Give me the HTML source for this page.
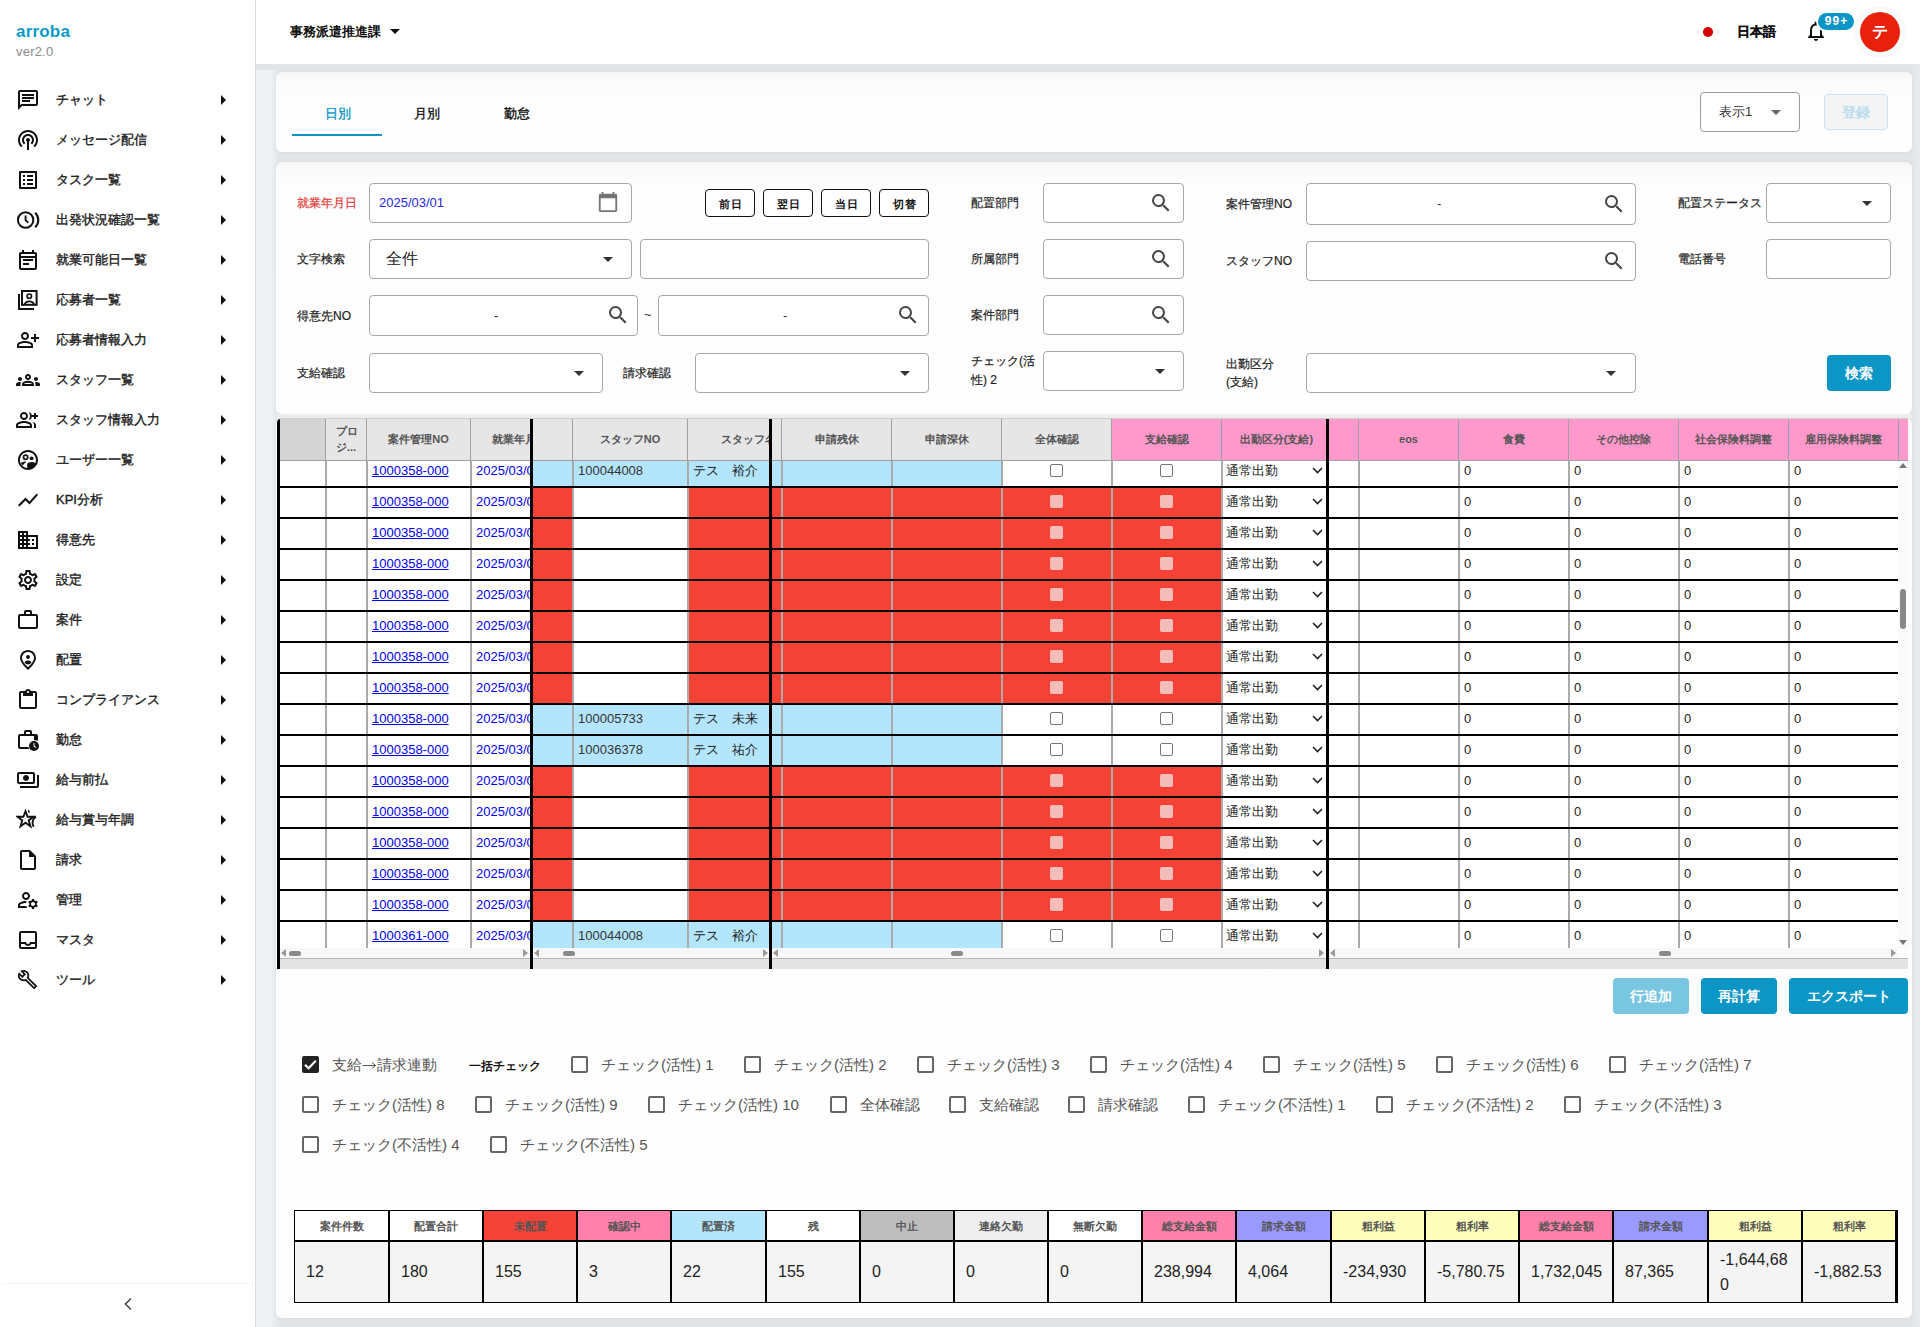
<!DOCTYPE html><html><head><meta charset="utf-8"><style>
*{box-sizing:border-box;margin:0;padding:0}
html,body{width:1920px;height:1327px;overflow:hidden}
body{position:relative;background:#e2e5e8;font-family:"Liberation Sans",sans-serif;color:#222}
.ab{position:absolute}
.t{position:absolute;white-space:nowrap;line-height:1}
.m{-webkit-text-stroke:0.35px currentColor}
.card{position:absolute;background:linear-gradient(#f6f6f6,#fafafa 8px,#fcfcfc 16px,#fdfdfd 24px,#fefefe);border-radius:6px;box-shadow:0 0 4px rgba(120,130,140,.12)}
.ic{position:absolute}
.tri-r{position:absolute;width:0;height:0;border-top:5px solid transparent;border-bottom:5px solid transparent;border-left:5px solid #111}
.tri-d{position:absolute;width:0;height:0;border-left:5px solid transparent;border-right:5px solid transparent;border-top:5px solid #222}
.box{position:absolute;border:1px solid #a8a8a8;border-radius:4px;background:#fff}
.lbl{position:absolute;white-space:nowrap;line-height:1;font-size:12px;color:#222;-webkit-text-stroke:0.2px currentColor}
.btn{position:absolute;border-radius:4px;color:#fff;font-weight:bold;font-size:14px;display:flex;align-items:center;justify-content:center;line-height:1}
.sbtn{position:absolute;border:1.5px solid #111;border-radius:4px;background:#fff;font-size:12px;font-weight:bold;display:flex;align-items:center;justify-content:center;line-height:1;color:#111}
</style></head><body>
<div class="ab" style="left:256px;top:70px;width:22px;height:1257px;background:linear-gradient(to right,#f0f3f6,#ecf0f3 70%,#e5e8eb)"></div>
<div class="ab" style="left:0;top:0;width:256px;height:1327px;background:#fff;border-right:1px solid #dcdcdc"></div>
<div class="t" style="left:16px;top:23px;font-size:17px;font-weight:bold;color:#0b9ac8;letter-spacing:0.2px">arroba</div>
<div class="t" style="left:16px;top:44.5px;font-size:13px;color:#8a8a8a;letter-spacing:0.2px">ver2.0</div>
<svg class="ic" style="left:16px;top:88px" width="24" height="24" viewBox="0 0 24 24" fill="#111"><path d="M4 4h16v12H5.17L4 17.17V4m0-2c-1.1 0-1.99.9-1.99 2L2 22l4-4h14c1.1 0 2-.9 2-2V4c0-1.1-.9-2-2-2H4zm2 10h8v2H6v-2zm0-3h12v2H6V9zm0-3h12v2H6V6z"/></svg>
<div class="t m" style="left:56px;top:93px;font-size:13px;color:#1a1a1a">チャット</div>
<div class="tri-r" style="left:221px;top:95px"></div>
<svg class="ic" style="left:16px;top:128px" width="24" height="24" viewBox="0 0 24 24" fill="#111"><path d="M14 12c0 .74-.4 1.38-1 1.72V22h-2v-8.28c-.6-.35-1-.98-1-1.72 0-1.1.9-2 2-2s2 .9 2 2zm-2-6c-3.31 0-6 2.69-6 6 0 1.74.75 3.31 1.94 4.4l1.42-1.42C8.53 14.25 8 13.19 8 12c0-2.21 1.79-4 4-4s4 1.79 4 4c0 1.19-.53 2.25-1.36 2.98l1.42 1.42C17.25 15.31 18 13.74 18 12c0-3.31-2.69-6-6-6zm0-4C6.48 2 2 6.48 2 12c0 2.85 1.2 5.41 3.11 7.24l1.42-1.42C4.98 16.36 4 14.29 4 12c0-4.41 3.59-8 8-8s8 3.59 8 8c0 2.29-.98 4.36-2.53 5.82l1.42 1.42C20.8 17.41 22 14.85 22 12c0-5.52-4.48-10-10-10z"/></svg>
<div class="t m" style="left:56px;top:133px;font-size:13px;color:#1a1a1a">メッセージ配信</div>
<div class="tri-r" style="left:221px;top:135px"></div>
<svg class="ic" style="left:16px;top:168px" width="24" height="24" viewBox="0 0 24 24" fill="#111"><path d="M19 5v14H5V5h14m1.1-2H3.9c-.5 0-.9.4-.9.9v16.2c0 .4.4.9.9.9h16.2c.4 0 .9-.5.9-.9V3.9c0-.5-.5-.9-.9-.9zM11 7h6v2h-6V7zm0 4h6v2h-6v-2zm0 4h6v2h-6zM7 7h2v2H7zm0 4h2v2H7zm0 4h2v2H7z"/></svg>
<div class="t m" style="left:56px;top:173px;font-size:13px;color:#1a1a1a">タスク一覧</div>
<div class="tri-r" style="left:221px;top:175px"></div>
<svg class="ic" style="left:16px;top:208px" width="24" height="24" viewBox="0 0 24 24" fill="#111"><circle cx="9.6" cy="12" r="7.7" fill="none" stroke="#111" stroke-width="2"/><path d="M9.6 7.6v4.6l2.8 2.4" fill="none" stroke="#111" stroke-width="1.9"/><path d="M19.2 4.8a10 10 0 0 1 0 14.4" fill="none" stroke="#111" stroke-width="2.1"/></svg>
<div class="t m" style="left:56px;top:213px;font-size:13px;color:#1a1a1a">出発状況確認一覧</div>
<div class="tri-r" style="left:221px;top:215px"></div>
<svg class="ic" style="left:16px;top:248px" width="24" height="24" viewBox="0 0 24 24" fill="#111"><path d="M19 4h-1V2h-2v2H8V2H6v2H5c-1.11 0-1.99.9-1.99 2L3 20a2 2 0 0 0 2 2h14c1.1 0 2-.9 2-2V6c0-1.1-.9-2-2-2zm0 16H5V10h14v10zm0-12H5V6h14v2zm-2 5H7v-2h10v2zm-4 4H7v-2h6v2z"/></svg>
<div class="t m" style="left:56px;top:253px;font-size:13px;color:#1a1a1a">就業可能日一覧</div>
<div class="tri-r" style="left:221px;top:255px"></div>
<svg class="ic" style="left:16px;top:288px" width="24" height="24" viewBox="0 0 24 24" fill="#111"><rect x="6" y="3" width="14.6" height="13.8" fill="none" stroke="#111" stroke-width="2"/><path d="M3 6v15h15" fill="none" stroke="#111" stroke-width="2"/><circle cx="13.3" cy="8.2" r="2.2" fill="none" stroke="#111" stroke-width="1.7"/><path d="M8.6 16.2c.8-1.9 2.6-2.8 4.7-2.8s3.9.9 4.7 2.8" fill="none" stroke="#111" stroke-width="1.8"/></svg>
<div class="t m" style="left:56px;top:293px;font-size:13px;color:#1a1a1a">応募者一覧</div>
<div class="tri-r" style="left:221px;top:295px"></div>
<svg class="ic" style="left:16px;top:328px" width="24" height="24" viewBox="0 0 24 24" fill="#111"><path d="M20 9V6h-2v3h-3v2h3v3h2v-3h3V9h-3zM9 12c2.21 0 4-1.79 4-4s-1.79-4-4-4-4 1.79-4 4 1.79 4 4 4zm0-6c1.1 0 2 .9 2 2s-.9 2-2 2-2-.9-2-2 .9-2 2-2zm6.39 8.56C13.71 13.7 11.53 13 9 13s-4.71.7-6.39 1.56A2.97 2.97 0 0 0 1 17.22V20h16v-2.78c0-1.12-.61-2.15-1.61-2.66zM15 18H3v-.78c0-.38.2-.72.52-.88C4.71 15.73 6.63 15 9 15c2.37 0 4.29.73 5.48 1.34.32.16.52.5.52.88V18z"/></svg>
<div class="t m" style="left:56px;top:333px;font-size:13px;color:#1a1a1a">応募者情報入力</div>
<div class="tri-r" style="left:221px;top:335px"></div>
<svg class="ic" style="left:16px;top:368px" width="24" height="24" viewBox="0 0 24 24" fill="#111"><path d="M4 13c1.1 0 2-.9 2-2s-.9-2-2-2-2 .9-2 2 .9 2 2 2zm1.13 1.1c-.37-.06-.74-.1-1.13-.1-.99 0-1.93.21-2.78.58A2.01 2.01 0 0 0 0 16.43V18h4.5v-1.61c0-.83.23-1.61.63-2.29zM20 13c1.1 0 2-.9 2-2s-.9-2-2-2-2 .9-2 2 .9 2 2 2zm4 3.43c0-.81-.48-1.53-1.22-1.85A6.95 6.95 0 0 0 20 14c-.39 0-.76.04-1.13.1.4.68.63 1.46.63 2.29V18H24v-1.57zm-7.76-2.78c-1.17-.52-2.61-.9-4.24-.9-1.63 0-3.07.39-4.24.9A2.99 2.99 0 0 0 6 16.39V18h12v-1.61c0-1.18-.68-2.26-1.76-2.74zM8.07 16c.09-.23.13-.39.91-.69.97-.38 1.99-.56 3.02-.56s2.05.18 3.02.56c.77.3.81.46.91.69H8.07zM12 8c.55 0 1 .45 1 1s-.45 1-1 1-1-.45-1-1 .45-1 1-1m0-2c-1.66 0-3 1.34-3 3s1.34 3 3 3 3-1.34 3-3-1.34-3-3-3z"/></svg>
<div class="t m" style="left:56px;top:373px;font-size:13px;color:#1a1a1a">スタッフ一覧</div>
<div class="tri-r" style="left:221px;top:375px"></div>
<svg class="ic" style="left:16px;top:408px" width="24" height="24" viewBox="0 0 24 24" fill="#111"><path d="M22 9V7h-2V5h-2v2h-2v2h2v2h2V9zM8 12c2.21 0 4-1.79 4-4s-1.79-4-4-4-4 1.79-4 4 1.79 4 4 4zm0-6c1.1 0 2 .9 2 2s-.9 2-2 2-2-.9-2-2 .9-2 2-2zm0 7c-2.67 0-8 1.34-8 4v3h16v-3c0-2.66-5.33-4-8-4zm6 5H2v-.99C2.2 16.29 5.3 15 8 15s5.8 1.29 6 2v1zM12.51 4.05C13.43 5.11 14 6.49 14 8s-.57 2.89-1.49 3.95C14.47 11.7 16 10.04 16 8s-1.53-3.7-3.49-3.95zm4.02 9.78C17.42 14.66 18 15.7 18 17v3h2v-3c0-1.45-1.59-2.51-3.47-3.17z"/></svg>
<div class="t m" style="left:56px;top:413px;font-size:13px;color:#1a1a1a">スタッフ情報入力</div>
<div class="tri-r" style="left:221px;top:415px"></div>
<svg class="ic" style="left:16px;top:448px" width="24" height="24" viewBox="0 0 24 24" fill="#111"><path d="M11.99 2c-5.52 0-10 4.48-10 10s4.48 10 10 10 10-4.48 10-10-4.48-10-10-10zm0 2c4.41 0 8 3.59 8 8 0 1.1-.22 2.14-.62 3.1-1.1-.75-2.7-1.05-3.77-1.05-1.46 0-4.4.71-4.4 2.13v3.76C6.78 19.55 4 16.1 4 12c0-4.41 3.58-8 7.99-8z"/><circle cx="9.6" cy="9.2" r="2.1" fill="none" stroke="#111" stroke-width="1.7"/><circle cx="15.6" cy="10.3" r="1.9"/><path d="M9.6 13.5c-1.4 0-3.6.5-4.7 1.5.5 1 1.2 1.9 2 2.6.6-1.4 1.6-2.6 3.2-3.4-.2-.5-.3-.7-.5-.7z"/></svg>
<div class="t m" style="left:56px;top:453px;font-size:13px;color:#1a1a1a">ユーザー一覧</div>
<div class="tri-r" style="left:221px;top:455px"></div>
<svg class="ic" style="left:16px;top:488px" width="24" height="24" viewBox="0 0 24 24" fill="#111"><path d="M3.5 18.49l6-6.01 4 4L22 6.92l-1.41-1.41-7.09 7.97-4-4L2 16.99z"/></svg>
<div class="t m" style="left:56px;top:493px;font-size:13px;color:#1a1a1a">KPI分析</div>
<div class="tri-r" style="left:221px;top:495px"></div>
<svg class="ic" style="left:16px;top:528px" width="24" height="24" viewBox="0 0 24 24" fill="#111"><path d="M12 7V3H2v18h20V7H12zM6 19H4v-2h2v2zm0-4H4v-2h2v2zm0-4H4V9h2v2zm0-4H4V5h2v2zm4 12H8v-2h2v2zm0-4H8v-2h2v2zm0-4H8V9h2v2zm0-4H8V5h2v2zm10 12h-8v-2h2v-2h-2v-2h2v-2h-2V9h8v10zm-2-8h-2v2h2v-2zm0 4h-2v2h2v-2z"/></svg>
<div class="t m" style="left:56px;top:533px;font-size:13px;color:#1a1a1a">得意先</div>
<div class="tri-r" style="left:221px;top:535px"></div>
<svg class="ic" style="left:16px;top:568px" width="24" height="24" viewBox="0 0 24 24" fill="#111"><path d="M19.43 12.98c.04-.32.07-.64.07-.98 0-.34-.03-.66-.07-.98l2.11-1.65c.19-.15.24-.42.12-.64l-2-3.46a.5.5 0 0 0-.61-.22l-2.49 1c-.52-.4-1.08-.73-1.69-.98l-.38-2.65A.488.488 0 0 0 14 2h-4c-.25 0-.46.18-.49.42l-.38 2.65c-.61.25-1.17.59-1.69.98l-2.49-1a.566.566 0 0 0-.18-.03c-.17 0-.34.09-.43.25l-2 3.46c-.13.22-.07.49.12.64l2.11 1.65c-.04.32-.07.65-.07.98 0 .33.03.66.07.98l-2.11 1.65c-.19.15-.24.42-.12.64l2 3.46a.5.5 0 0 0 .61.22l2.49-1c.52.4 1.08.73 1.69.98l.38 2.65c.03.24.24.42.49.42h4c.25 0 .46-.18.49-.42l.38-2.65c.61-.25 1.17-.59 1.69-.98l2.49 1c.06.02.12.03.18.03.17 0 .34-.09.43-.25l2-3.46c.12-.22.07-.49-.12-.64l-2.11-1.65zm-1.98-1.71c.04.31.05.52.05.73 0 .21-.02.43-.05.73l-.14 1.13.89.7 1.08.84-.7 1.21-1.27-.51-1.04-.42-.9.68c-.43.32-.84.56-1.25.73l-1.06.43-.16 1.13-.2 1.35h-1.4l-.19-1.35-.16-1.13-1.06-.43c-.43-.18-.83-.41-1.23-.71l-.91-.7-1.06.43-1.27.51-.7-1.21 1.08-.84.89-.7-.14-1.13c-.03-.31-.05-.54-.05-.74s.02-.43.05-.73l.14-1.13-.89-.7-1.08-.84.7-1.21 1.27.51 1.04.42.9-.68c.43-.32.84-.56 1.25-.73l1.06-.43.16-1.13.2-1.35h1.39l.19 1.35.16 1.13 1.06.43c.43.18.83.41 1.23.71l.91.7 1.06-.43 1.27-.51.7 1.21-1.07.85-.89.7.14 1.13zM12 8c-2.21 0-4 1.79-4 4s1.79 4 4 4 4-1.79 4-4-1.79-4-4-4zm0 6c-1.1 0-2-.9-2-2s.9-2 2-2 2 .9 2 2-.9 2-2 2z"/></svg>
<div class="t m" style="left:56px;top:573px;font-size:13px;color:#1a1a1a">設定</div>
<div class="tri-r" style="left:221px;top:575px"></div>
<svg class="ic" style="left:16px;top:608px" width="24" height="24" viewBox="0 0 24 24" fill="#111"><path d="M14 6V4h-4v2h4zM4 8v11h16V8H4zm16-2c1.11 0 2 .89 2 2v11c0 1.11-.89 2-2 2H4c-1.11 0-2-.89-2-2l.01-11c0-1.11.88-2 1.99-2h4V4c0-1.11.89-2 2-2h4c1.11 0 2 .89 2 2v2h4z"/></svg>
<div class="t m" style="left:56px;top:613px;font-size:13px;color:#1a1a1a">案件</div>
<div class="tri-r" style="left:221px;top:615px"></div>
<svg class="ic" style="left:16px;top:648px" width="24" height="24" viewBox="0 0 24 24" fill="#111"><path d="M12 2C7.6 2 4 5.6 4 10c0 5.2 8 12 8 12s8-6.8 8-12c0-4.4-3.6-8-8-8zm0 17.3C9.6 17 6 13.3 6 10c0-3.3 2.7-6 6-6s6 2.7 6 6c0 3.3-3.6 7-6 9.3z"/><path d="M12 11a2 2 0 1 0 0-4a2 2 0 0 0 0 4zM8.5 14.2c.9-1.2 2.2-1.7 3.5-1.7s2.6.5 3.5 1.7c-.9 1.3-2.1 2.3-3.5 2.3s-2.6-1-3.5-2.3z"/></svg>
<div class="t m" style="left:56px;top:653px;font-size:13px;color:#1a1a1a">配置</div>
<div class="tri-r" style="left:221px;top:655px"></div>
<svg class="ic" style="left:16px;top:688px" width="24" height="24" viewBox="0 0 24 24" fill="#111"><path d="M19 3h-4.18C14.4 1.84 13.3 1 12 1s-2.4.84-2.82 2H5c-1.1 0-2 .9-2 2v14c0 1.1.9 2 2 2h14c1.1 0 2-.9 2-2V5c0-1.1-.9-2-2-2zm-7 0c.55 0 1 .45 1 1s-.45 1-1 1-1-.45-1-1 .45-1 1-1zm7 16H5V5h2v3h10V5h2v14z"/></svg>
<div class="t m" style="left:56px;top:693px;font-size:13px;color:#1a1a1a">コンプライアンス</div>
<div class="tri-r" style="left:221px;top:695px"></div>
<svg class="ic" style="left:16px;top:728px" width="24" height="24" viewBox="0 0 24 24" fill="#111"><path d="M18 12.2V8H4v11h8.4c.2.7.5 1.4.9 2H4c-1.1 0-2-.9-2-2l.01-11C2.01 6.9 2.9 6 4 6h4V4c0-1.1.9-2 2-2h4c1.1 0 2 .9 2 2v2h4c1.1 0 2 .9 2 2v4.8c-.6-.3-1.3-.5-2-.6zM10 6h4V4h-4v2z"/><circle cx="18" cy="18" r="5"/><path d="M17.5 15h1v3l2 1.2-.5.8-2.5-1.5z" fill="#fff"/></svg>
<div class="t m" style="left:56px;top:733px;font-size:13px;color:#1a1a1a">勤怠</div>
<div class="tri-r" style="left:221px;top:735px"></div>
<svg class="ic" style="left:16px;top:768px" width="24" height="24" viewBox="0 0 24 24" fill="#111"><path d="M19 14V6c0-1.1-.9-2-2-2H3c-1.1 0-2 .9-2 2v8c0 1.1.9 2 2 2h14c1.1 0 2-.9 2-2zm-2 0H3V6h14v8zm-7-7c-1.66 0-3 1.34-3 3s1.34 3 3 3 3-1.34 3-3-1.34-3-3-3zm13 0v11c0 1.1-.9 2-2 2H4v-2h17V7h2z"/></svg>
<div class="t m" style="left:56px;top:773px;font-size:13px;color:#1a1a1a">給与前払</div>
<div class="tri-r" style="left:221px;top:775px"></div>
<svg class="ic" style="left:16px;top:808px" width="24" height="24" viewBox="0 0 24 24" fill="#111"><path d="M9.5 3.2l2.1 5.6h5.9l-4.8 3.6 1.8 6-5-3.7-5 3.7 1.8-6L1.5 8.8h5.9z" fill="none" stroke="#111" stroke-width="1.9" stroke-linejoin="miter"/><path d="M13 1.8l.9 2.6-1.3.5-.9-2.6zM20.5 9.5c-1.3.8-2.4 2-2.8 3.6-.4 1.7-.1 3.6.8 5.2l-1.6.9c-1.2-2-1.5-4.3-1-6.4.5-2 1.9-3.7 3.6-4.7z"/></svg>
<div class="t m" style="left:56px;top:813px;font-size:13px;color:#1a1a1a">給与賞与年調</div>
<div class="tri-r" style="left:221px;top:815px"></div>
<svg class="ic" style="left:16px;top:848px" width="24" height="24" viewBox="0 0 24 24" fill="#111"><path d="M14 2H6c-1.1 0-1.99.9-1.99 2L4 20c0 1.1.89 2 1.99 2H18c1.1 0 2-.9 2-2V8l-6-6zM6 20V4h7v5h5v11H6z"/><path d="M13.5 2.5L19.5 8.5H13.5z"/></svg>
<div class="t m" style="left:56px;top:853px;font-size:13px;color:#1a1a1a">請求</div>
<div class="tri-r" style="left:221px;top:855px"></div>
<svg class="ic" style="left:16px;top:888px" width="24" height="24" viewBox="0 0 24 24" fill="#111"><path d="M4 18v-.65c0-.34.16-.66.41-.81C6.1 15.53 8.03 15 10 15c.03 0 .05 0 .08.01.1-.7.3-1.37.59-1.98-.22-.02-.44-.03-.67-.03-2.42 0-4.68.67-6.61 1.82-.88.52-1.39 1.5-1.39 2.53V20h9.26c-.42-.6-.75-1.28-.97-2H4zM10 12c2.21 0 4-1.79 4-4s-1.79-4-4-4-4 1.79-4 4 1.79 4 4 4zm0-6c1.1 0 2 .9 2 2s-.9 2-2 2-2-.9-2-2 .9-2 2-2zM20.75 16c0-.22-.03-.42-.06-.63l1.14-1.01-1-1.73-1.45.49c-.32-.27-.68-.48-1.08-.63L18 11h-2l-.3 1.49c-.4.15-.76.36-1.08.63l-1.45-.49-1 1.73 1.14 1.01c-.03.21-.06.41-.06.63s.03.42.06.63l-1.14 1.01 1 1.73 1.45-.49c.32.27.68.48 1.08.63L16 21h2l.3-1.49c.4-.15.76-.36 1.08-.63l1.45.49 1-1.73-1.14-1.01c.03-.21.06-.41.06-.63zM17 18c-1.1 0-2-.9-2-2s.9-2 2-2 2 .9 2 2-.9 2-2 2z"/></svg>
<div class="t m" style="left:56px;top:893px;font-size:13px;color:#1a1a1a">管理</div>
<div class="tri-r" style="left:221px;top:895px"></div>
<svg class="ic" style="left:16px;top:928px" width="24" height="24" viewBox="0 0 24 24" fill="#111"><path d="M19 3H4.99C3.88 3 3.01 3.89 3.01 5L3 19c0 1.1.88 2 1.99 2H19c1.1 0 2-.9 2-2V5c0-1.11-.9-2-2-2zm0 16H5v-3h3.56c.69 1.19 1.97 2 3.45 2s2.75-.81 3.45-2H19v3zm0-5h-4.99c0 1.1-.9 2-2 2s-2-.9-2-2H5V5h14v9z"/></svg>
<div class="t m" style="left:56px;top:933px;font-size:13px;color:#1a1a1a">マスタ</div>
<div class="tri-r" style="left:221px;top:935px"></div>
<svg class="ic" style="left:17px;top:969px" width="21" height="21" viewBox="0 0 24 24" fill="#111"><path d="M22.61 18.99l-9.08-9.08c.93-2.34.45-5.1-1.44-7C9.79.61 6.21.4 3.66 2.26L7.5 6.11 6.08 7.52 2.25 3.69C.39 6.23.6 9.82 2.9 12.11c1.86 1.86 4.57 2.35 6.89 1.48l9.11 9.11c.39.39 1.02.39 1.41 0l2.3-2.3c.4-.38.4-1.01 0-1.41zm-3 1.6l-9.46-9.46c-.61.45-1.29.72-2 .82-1.36.2-2.79-.21-3.83-1.25C3.37 9.76 2.93 8.5 3 7.26l3.09 3.09 4.24-4.24-3.09-3.09c1.24-.07 2.49.37 3.44 1.31a4.469 4.469 0 0 1 1.24 3.96 4.35 4.35 0 0 1-.88 1.96l9.45 9.45-.88.89z"/></svg>
<div class="t m" style="left:56px;top:973px;font-size:13px;color:#1a1a1a">ツール</div>
<div class="tri-r" style="left:221px;top:975px"></div>
<div class="ab" style="left:0;top:1283px;width:255px;height:44px;border-top:1px solid #f5f5f5;border-radius:6px 6px 0 0"></div>
<svg class="ic" style="left:120px;top:1296px" width="16" height="16" viewBox="0 0 16 16"><path d="M11 2.5L5.5 8 11 13.5" fill="none" stroke="#4a4f57" stroke-width="1.7"/></svg>
<div class="ab" style="left:1912px;top:64px;width:8px;height:1263px;background:linear-gradient(to right,#e3e6e9,#e9ecef)"></div>
<div class="ab" style="left:256px;top:0;width:1664px;height:64px;background:#fff"></div>
<div class="t" style="left:290px;top:25px;font-size:13px;font-weight:bold;color:#111">事務派遣推進課</div>
<div class="tri-d" style="left:390px;top:29px;border-top-color:#111"></div>
<div class="ab" style="left:1703px;top:27px;width:10px;height:10px;border-radius:50%;background:#d50000"></div>
<div class="t" style="left:1737px;top:25px;font-size:13px;font-weight:bold;color:#111;-webkit-text-stroke:0.3px #111">日本語</div>
<svg class="ic" style="left:1804px;top:19px" width="24" height="24" viewBox="0 0 24 24"><path d="M12 22c1.1 0 2-.9 2-2h-4c0 1.1.89 2 2 2zm6-6v-5c0-3.07-1.64-5.64-4.5-6.32V4c0-.83-.67-1.5-1.5-1.5s-1.5.67-1.5 1.5v.68C7.63 5.36 6 7.92 6 11v5l-2 2v1h16v-1l-2-2zm-2 1H8v-6c0-2.48 1.51-4.5 4-4.5s4 2.02 4 4.5v6z" fill="#111"/></svg>
<div class="ab" style="left:1818px;top:13px;width:36px;height:17px;border-radius:9px;background:#0996c6;box-shadow:0 0 0 2px #fff;color:#fff;font-size:12px;font-weight:bold;line-height:17px;text-align:center;letter-spacing:1px;padding-left:1px">99+</div>
<div class="ab" style="left:1856px;top:8px;width:48px;height:48px;border-radius:50%;background:#fff;box-shadow:0 0 3px rgba(0,0,0,.10)"></div>
<div class="ab" style="left:1860px;top:12px;width:40px;height:40px;border-radius:50%;background:#e8200c;color:#fff;font-size:16px;font-weight:bold;line-height:40px;text-align:center">テ</div>
<div class="card" style="left:276px;top:72px;width:1636px;height:80px"></div>
<div class="t m" style="left:325px;top:107px;font-size:13px;color:#0b96c6">日別</div>
<div class="t m" style="left:414px;top:107px;font-size:13px;color:#111">月別</div>
<div class="t m" style="left:504px;top:107px;font-size:13px;color:#111">勤怠</div>
<div class="ab" style="left:292px;top:134px;width:90px;height:2px;background:#0b96c6"></div>
<div class="box" style="left:1700px;top:92px;width:100px;height:40px;border-color:#999"></div>
<div class="t" style="left:1719px;top:105px;font-size:13px;color:#333">表示1</div>
<div class="tri-d" style="left:1771px;top:110px;border-top-color:#666"></div>
<div class="ab" style="left:1824px;top:94px;width:64px;height:36px;border:1px solid #c6e6f1;border-radius:4px;background:#f4f4f4"></div>
<div class="t" style="left:1842px;top:105px;font-size:14px;font-weight:bold;color:#b9dded">登録</div>
<div class="card" style="left:276px;top:162px;width:1636px;height:252px"></div>
<div class="lbl" style="left:297px;top:196.5px;font-size:12px;color:#e53935">就業年月日</div>
<div class="box" style="left:369px;top:183px;width:263px;height:40px"></div>
<div class="t" style="left:379px;top:196px;font-size:13px;color:#2727ee">2025/03/01</div>
<svg class="ic" style="left:597px;top:191px" width="22" height="22" viewBox="0 0 24 24"><path d="M20 3h-1V1h-2v2H7V1H5v2H4c-1.1 0-2 .9-2 2v16c0 1.1.9 2 2 2h16c1.1 0 2-.9 2-2V5c0-1.1-.9-2-2-2zm0 18H4V8h16v13z" fill="#757575"/></svg>
<div class="sbtn" style="left:705px;top:189px;width:50px;height:28px;font-size:11px;padding-top:2px;padding-left:1px;letter-spacing:1px">前日</div>
<div class="sbtn" style="left:763px;top:189px;width:50px;height:28px;font-size:11px;padding-top:2px;padding-left:1px;letter-spacing:1px">翌日</div>
<div class="sbtn" style="left:821px;top:189px;width:50px;height:28px;font-size:11px;padding-top:2px;padding-left:1px;letter-spacing:1px">当日</div>
<div class="sbtn" style="left:879px;top:189px;width:50px;height:28px;font-size:11px;padding-top:2px;padding-left:1px;letter-spacing:1px">切替</div>
<div class="lbl" style="left:297px;top:252.5px;font-size:12px;color:#222">文字検索</div>
<div class="box" style="left:369px;top:239px;width:263px;height:40px"></div>
<div class="t" style="left:386px;top:251px;font-size:16px;color:#222">全件</div>
<div class="tri-d" style="left:603px;top:257px;border-top-color:#333"></div>
<div class="box" style="left:640px;top:239px;width:289px;height:40px"></div>
<div class="lbl" style="left:297px;top:309.5px;font-size:12px;color:#222">得意先NO</div>
<div class="box" style="left:369px;top:295px;width:269px;height:41px"></div>
<div class="t" style="left:494px;top:309px;font-size:13px;color:#333">-</div>
<svg class="ic" style="left:605.5px;top:303px" width="24" height="24" viewBox="0 0 24 24"><path d="M15.5 14h-.79l-.28-.27A6.471 6.471 0 0 0 16 9.5 6.5 6.5 0 1 0 9.5 16c1.61 0 3.09-.59 4.23-1.57l.27.28v.79l5 4.99L20.49 19l-4.99-5zm-6 0C7.01 14 5 11.99 5 9.5S7.01 5 9.5 5 14 7.01 14 9.5 11.99 14 9.5 14z" fill="#444"/></svg>
<div class="t" style="left:644px;top:308px;font-size:13px;color:#333">~</div>
<div class="box" style="left:658px;top:295px;width:271px;height:41px"></div>
<div class="t" style="left:783px;top:309px;font-size:13px;color:#333">-</div>
<svg class="ic" style="left:895.5px;top:303px" width="24" height="24" viewBox="0 0 24 24"><path d="M15.5 14h-.79l-.28-.27A6.471 6.471 0 0 0 16 9.5 6.5 6.5 0 1 0 9.5 16c1.61 0 3.09-.59 4.23-1.57l.27.28v.79l5 4.99L20.49 19l-4.99-5zm-6 0C7.01 14 5 11.99 5 9.5S7.01 5 9.5 5 14 7.01 14 9.5 11.99 14 9.5 14z" fill="#444"/></svg>
<div class="lbl" style="left:297px;top:366.5px;font-size:12px;color:#222">支給確認</div>
<div class="box" style="left:369px;top:353px;width:234px;height:40px"></div>
<div class="tri-d" style="left:574px;top:371px;border-top-color:#333"></div>
<div class="lbl" style="left:623px;top:366.5px;font-size:12px;color:#222">請求確認</div>
<div class="box" style="left:695px;top:353px;width:234px;height:40px"></div>
<div class="tri-d" style="left:900px;top:371px;border-top-color:#333"></div>
<div class="lbl" style="left:971px;top:196.5px;font-size:12px;color:#222">配置部門</div>
<div class="box" style="left:1043px;top:183px;width:141px;height:40px"></div>
<svg class="ic" style="left:1148.5px;top:191px" width="24" height="24" viewBox="0 0 24 24"><path d="M15.5 14h-.79l-.28-.27A6.471 6.471 0 0 0 16 9.5 6.5 6.5 0 1 0 9.5 16c1.61 0 3.09-.59 4.23-1.57l.27.28v.79l5 4.99L20.49 19l-4.99-5zm-6 0C7.01 14 5 11.99 5 9.5S7.01 5 9.5 5 14 7.01 14 9.5 11.99 14 9.5 14z" fill="#444"/></svg>
<div class="lbl" style="left:1226px;top:197.5px;font-size:12px;color:#222">案件管理NO</div>
<div class="box" style="left:1306px;top:183px;width:330px;height:42px"></div>
<div class="t" style="left:1437px;top:197px;font-size:13px;color:#333">-</div>
<svg class="ic" style="left:1601.5px;top:192px" width="24" height="24" viewBox="0 0 24 24"><path d="M15.5 14h-.79l-.28-.27A6.471 6.471 0 0 0 16 9.5 6.5 6.5 0 1 0 9.5 16c1.61 0 3.09-.59 4.23-1.57l.27.28v.79l5 4.99L20.49 19l-4.99-5zm-6 0C7.01 14 5 11.99 5 9.5S7.01 5 9.5 5 14 7.01 14 9.5 11.99 14 9.5 14z" fill="#444"/></svg>
<div class="lbl" style="left:1678px;top:196.5px;font-size:12px;color:#222">配置ステータス</div>
<div class="box" style="left:1766px;top:183px;width:125px;height:40px"></div>
<div class="tri-d" style="left:1862px;top:201px;border-top-color:#333"></div>
<div class="lbl" style="left:971px;top:252.5px;font-size:12px;color:#222">所属部門</div>
<div class="box" style="left:1043px;top:239px;width:141px;height:40px"></div>
<svg class="ic" style="left:1148.5px;top:247px" width="24" height="24" viewBox="0 0 24 24"><path d="M15.5 14h-.79l-.28-.27A6.471 6.471 0 0 0 16 9.5 6.5 6.5 0 1 0 9.5 16c1.61 0 3.09-.59 4.23-1.57l.27.28v.79l5 4.99L20.49 19l-4.99-5zm-6 0C7.01 14 5 11.99 5 9.5S7.01 5 9.5 5 14 7.01 14 9.5 11.99 14 9.5 14z" fill="#444"/></svg>
<div class="lbl" style="left:1226px;top:254.5px;font-size:12px;color:#222">スタッフNO</div>
<div class="box" style="left:1306px;top:241px;width:330px;height:40px"></div>
<svg class="ic" style="left:1601.5px;top:249px" width="24" height="24" viewBox="0 0 24 24"><path d="M15.5 14h-.79l-.28-.27A6.471 6.471 0 0 0 16 9.5 6.5 6.5 0 1 0 9.5 16c1.61 0 3.09-.59 4.23-1.57l.27.28v.79l5 4.99L20.49 19l-4.99-5zm-6 0C7.01 14 5 11.99 5 9.5S7.01 5 9.5 5 14 7.01 14 9.5 11.99 14 9.5 14z" fill="#444"/></svg>
<div class="lbl" style="left:1678px;top:252.5px;font-size:12px;color:#222">電話番号</div>
<div class="box" style="left:1766px;top:239px;width:125px;height:40px"></div>
<div class="lbl" style="left:971px;top:308.5px;font-size:12px;color:#222">案件部門</div>
<div class="box" style="left:1043px;top:295px;width:141px;height:40px"></div>
<svg class="ic" style="left:1148.5px;top:303px" width="24" height="24" viewBox="0 0 24 24"><path d="M15.5 14h-.79l-.28-.27A6.471 6.471 0 0 0 16 9.5 6.5 6.5 0 1 0 9.5 16c1.61 0 3.09-.59 4.23-1.57l.27.28v.79l5 4.99L20.49 19l-4.99-5zm-6 0C7.01 14 5 11.99 5 9.5S7.01 5 9.5 5 14 7.01 14 9.5 11.99 14 9.5 14z" fill="#444"/></svg>
<div class="lbl" style="left:971px;top:351.5px;line-height:19px;white-space:normal;width:70px">チェック(活<br>性) 2</div>
<div class="box" style="left:1043px;top:351px;width:141px;height:40px"></div>
<div class="tri-d" style="left:1155px;top:369px;border-top-color:#333"></div>
<div class="lbl" style="left:1226px;top:354.5px;line-height:18px;white-space:normal;width:70px">出勤区分<br>(支給)</div>
<div class="box" style="left:1306px;top:353px;width:330px;height:40px"></div>
<div class="tri-d" style="left:1606px;top:371px;border-top-color:#333"></div>
<div class="btn" style="left:1827px;top:355px;width:64px;height:36px;background:#0b96c6">検索</div>
<div class="card" style="left:276px;top:418px;width:1636px;height:900px"></div>
<div class="ab" style="left:276px;top:413.5px;width:1636px;height:5px;background:linear-gradient(#efefef,#e9e9e9)"></div>
<div class="ab" style="left:280px;top:418px;width:1628px;height:1px;background:#cdcdcd"></div>
<div class="ab" style="left:280px;top:419px;width:250px;height:529px;overflow:hidden;background:#fff">
<div class="ab" style="left:0px;top:0;width:46px;height:41px;background:#d4d4d4;border-right:1px solid #a0a0a0"></div>
<div class="ab" style="left:46px;top:0;width:41px;height:41px;background:#e6e6e6;border-right:1px solid #a0a0a0"></div>
<div class="ab" style="left:87px;top:0;width:104px;height:41px;background:#e6e6e6;border-right:1px solid #a0a0a0"></div>
<div class="t" style="left:38.5px;width:200px;text-align:center;top:15px;font-size:11px;font-weight:bold;color:#555">案件管理NO</div>
<div class="ab" style="left:191px;top:0;width:98px;height:41px;background:#e6e6e6;border-right:1px solid #a0a0a0"></div>
<div class="t" style="left:139.5px;width:200px;text-align:center;top:15px;font-size:11px;font-weight:bold;color:#555">就業年月日</div>
<div class="ab" style="left:0;top:41px;width:250px;height:1px;background:#a0a0a0"></div>
<div class="ab" style="left:0;top:42px;width:250px;height:487px;overflow:hidden">
<div class="ab" style="left:0;top:-4px;width:250px;height:31px;border-bottom:2px solid #000">
<div class="ab" style="left:0px;top:0;width:46px;height:29px;background:#fff"></div>
<div class="ab" style="left:46px;top:0;width:41px;height:29px;background:#fff"></div>
<div class="ab" style="left:87px;top:0;width:104px;height:29px;background:#fff"><div class="t" style="left:5px;top:6.5px;font-size:13px;color:#0000ee;text-decoration:underline">1000358-000</div></div>
<div class="ab" style="left:191px;top:0;width:98px;height:29px;background:#fff"><div class="t" style="left:5px;top:6.5px;font-size:13px;color:#0000ee;">2025/03/01</div></div>
<div class="ab" style="left:45px;top:0;width:2px;height:29px;background:#aaa"></div>
<div class="ab" style="left:86px;top:0;width:2px;height:29px;background:#aaa"></div>
<div class="ab" style="left:190px;top:0;width:2px;height:29px;background:#aaa"></div>
<div class="ab" style="left:288px;top:0;width:2px;height:29px;background:#aaa"></div>
</div>
<div class="ab" style="left:0;top:27px;width:250px;height:31px;border-bottom:2px solid #000">
<div class="ab" style="left:0px;top:0;width:46px;height:29px;background:#fff"></div>
<div class="ab" style="left:46px;top:0;width:41px;height:29px;background:#fff"></div>
<div class="ab" style="left:87px;top:0;width:104px;height:29px;background:#fff"><div class="t" style="left:5px;top:6.5px;font-size:13px;color:#0000ee;text-decoration:underline">1000358-000</div></div>
<div class="ab" style="left:191px;top:0;width:98px;height:29px;background:#fff"><div class="t" style="left:5px;top:6.5px;font-size:13px;color:#0000ee;">2025/03/01</div></div>
<div class="ab" style="left:45px;top:0;width:2px;height:29px;background:#aaa"></div>
<div class="ab" style="left:86px;top:0;width:2px;height:29px;background:#aaa"></div>
<div class="ab" style="left:190px;top:0;width:2px;height:29px;background:#aaa"></div>
<div class="ab" style="left:288px;top:0;width:2px;height:29px;background:#aaa"></div>
</div>
<div class="ab" style="left:0;top:58px;width:250px;height:31px;border-bottom:2px solid #000">
<div class="ab" style="left:0px;top:0;width:46px;height:29px;background:#fff"></div>
<div class="ab" style="left:46px;top:0;width:41px;height:29px;background:#fff"></div>
<div class="ab" style="left:87px;top:0;width:104px;height:29px;background:#fff"><div class="t" style="left:5px;top:6.5px;font-size:13px;color:#0000ee;text-decoration:underline">1000358-000</div></div>
<div class="ab" style="left:191px;top:0;width:98px;height:29px;background:#fff"><div class="t" style="left:5px;top:6.5px;font-size:13px;color:#0000ee;">2025/03/01</div></div>
<div class="ab" style="left:45px;top:0;width:2px;height:29px;background:#aaa"></div>
<div class="ab" style="left:86px;top:0;width:2px;height:29px;background:#aaa"></div>
<div class="ab" style="left:190px;top:0;width:2px;height:29px;background:#aaa"></div>
<div class="ab" style="left:288px;top:0;width:2px;height:29px;background:#aaa"></div>
</div>
<div class="ab" style="left:0;top:89px;width:250px;height:31px;border-bottom:2px solid #000">
<div class="ab" style="left:0px;top:0;width:46px;height:29px;background:#fff"></div>
<div class="ab" style="left:46px;top:0;width:41px;height:29px;background:#fff"></div>
<div class="ab" style="left:87px;top:0;width:104px;height:29px;background:#fff"><div class="t" style="left:5px;top:6.5px;font-size:13px;color:#0000ee;text-decoration:underline">1000358-000</div></div>
<div class="ab" style="left:191px;top:0;width:98px;height:29px;background:#fff"><div class="t" style="left:5px;top:6.5px;font-size:13px;color:#0000ee;">2025/03/01</div></div>
<div class="ab" style="left:45px;top:0;width:2px;height:29px;background:#aaa"></div>
<div class="ab" style="left:86px;top:0;width:2px;height:29px;background:#aaa"></div>
<div class="ab" style="left:190px;top:0;width:2px;height:29px;background:#aaa"></div>
<div class="ab" style="left:288px;top:0;width:2px;height:29px;background:#aaa"></div>
</div>
<div class="ab" style="left:0;top:120px;width:250px;height:31px;border-bottom:2px solid #000">
<div class="ab" style="left:0px;top:0;width:46px;height:29px;background:#fff"></div>
<div class="ab" style="left:46px;top:0;width:41px;height:29px;background:#fff"></div>
<div class="ab" style="left:87px;top:0;width:104px;height:29px;background:#fff"><div class="t" style="left:5px;top:6.5px;font-size:13px;color:#0000ee;text-decoration:underline">1000358-000</div></div>
<div class="ab" style="left:191px;top:0;width:98px;height:29px;background:#fff"><div class="t" style="left:5px;top:6.5px;font-size:13px;color:#0000ee;">2025/03/01</div></div>
<div class="ab" style="left:45px;top:0;width:2px;height:29px;background:#aaa"></div>
<div class="ab" style="left:86px;top:0;width:2px;height:29px;background:#aaa"></div>
<div class="ab" style="left:190px;top:0;width:2px;height:29px;background:#aaa"></div>
<div class="ab" style="left:288px;top:0;width:2px;height:29px;background:#aaa"></div>
</div>
<div class="ab" style="left:0;top:151px;width:250px;height:31px;border-bottom:2px solid #000">
<div class="ab" style="left:0px;top:0;width:46px;height:29px;background:#fff"></div>
<div class="ab" style="left:46px;top:0;width:41px;height:29px;background:#fff"></div>
<div class="ab" style="left:87px;top:0;width:104px;height:29px;background:#fff"><div class="t" style="left:5px;top:6.5px;font-size:13px;color:#0000ee;text-decoration:underline">1000358-000</div></div>
<div class="ab" style="left:191px;top:0;width:98px;height:29px;background:#fff"><div class="t" style="left:5px;top:6.5px;font-size:13px;color:#0000ee;">2025/03/01</div></div>
<div class="ab" style="left:45px;top:0;width:2px;height:29px;background:#aaa"></div>
<div class="ab" style="left:86px;top:0;width:2px;height:29px;background:#aaa"></div>
<div class="ab" style="left:190px;top:0;width:2px;height:29px;background:#aaa"></div>
<div class="ab" style="left:288px;top:0;width:2px;height:29px;background:#aaa"></div>
</div>
<div class="ab" style="left:0;top:182px;width:250px;height:31px;border-bottom:2px solid #000">
<div class="ab" style="left:0px;top:0;width:46px;height:29px;background:#fff"></div>
<div class="ab" style="left:46px;top:0;width:41px;height:29px;background:#fff"></div>
<div class="ab" style="left:87px;top:0;width:104px;height:29px;background:#fff"><div class="t" style="left:5px;top:6.5px;font-size:13px;color:#0000ee;text-decoration:underline">1000358-000</div></div>
<div class="ab" style="left:191px;top:0;width:98px;height:29px;background:#fff"><div class="t" style="left:5px;top:6.5px;font-size:13px;color:#0000ee;">2025/03/01</div></div>
<div class="ab" style="left:45px;top:0;width:2px;height:29px;background:#aaa"></div>
<div class="ab" style="left:86px;top:0;width:2px;height:29px;background:#aaa"></div>
<div class="ab" style="left:190px;top:0;width:2px;height:29px;background:#aaa"></div>
<div class="ab" style="left:288px;top:0;width:2px;height:29px;background:#aaa"></div>
</div>
<div class="ab" style="left:0;top:213px;width:250px;height:31px;border-bottom:2px solid #000">
<div class="ab" style="left:0px;top:0;width:46px;height:29px;background:#fff"></div>
<div class="ab" style="left:46px;top:0;width:41px;height:29px;background:#fff"></div>
<div class="ab" style="left:87px;top:0;width:104px;height:29px;background:#fff"><div class="t" style="left:5px;top:6.5px;font-size:13px;color:#0000ee;text-decoration:underline">1000358-000</div></div>
<div class="ab" style="left:191px;top:0;width:98px;height:29px;background:#fff"><div class="t" style="left:5px;top:6.5px;font-size:13px;color:#0000ee;">2025/03/01</div></div>
<div class="ab" style="left:45px;top:0;width:2px;height:29px;background:#aaa"></div>
<div class="ab" style="left:86px;top:0;width:2px;height:29px;background:#aaa"></div>
<div class="ab" style="left:190px;top:0;width:2px;height:29px;background:#aaa"></div>
<div class="ab" style="left:288px;top:0;width:2px;height:29px;background:#aaa"></div>
</div>
<div class="ab" style="left:0;top:244px;width:250px;height:31px;border-bottom:2px solid #000">
<div class="ab" style="left:0px;top:0;width:46px;height:29px;background:#fff"></div>
<div class="ab" style="left:46px;top:0;width:41px;height:29px;background:#fff"></div>
<div class="ab" style="left:87px;top:0;width:104px;height:29px;background:#fff"><div class="t" style="left:5px;top:6.5px;font-size:13px;color:#0000ee;text-decoration:underline">1000358-000</div></div>
<div class="ab" style="left:191px;top:0;width:98px;height:29px;background:#fff"><div class="t" style="left:5px;top:6.5px;font-size:13px;color:#0000ee;">2025/03/01</div></div>
<div class="ab" style="left:45px;top:0;width:2px;height:29px;background:#aaa"></div>
<div class="ab" style="left:86px;top:0;width:2px;height:29px;background:#aaa"></div>
<div class="ab" style="left:190px;top:0;width:2px;height:29px;background:#aaa"></div>
<div class="ab" style="left:288px;top:0;width:2px;height:29px;background:#aaa"></div>
</div>
<div class="ab" style="left:0;top:275px;width:250px;height:31px;border-bottom:2px solid #000">
<div class="ab" style="left:0px;top:0;width:46px;height:29px;background:#fff"></div>
<div class="ab" style="left:46px;top:0;width:41px;height:29px;background:#fff"></div>
<div class="ab" style="left:87px;top:0;width:104px;height:29px;background:#fff"><div class="t" style="left:5px;top:6.5px;font-size:13px;color:#0000ee;text-decoration:underline">1000358-000</div></div>
<div class="ab" style="left:191px;top:0;width:98px;height:29px;background:#fff"><div class="t" style="left:5px;top:6.5px;font-size:13px;color:#0000ee;">2025/03/01</div></div>
<div class="ab" style="left:45px;top:0;width:2px;height:29px;background:#aaa"></div>
<div class="ab" style="left:86px;top:0;width:2px;height:29px;background:#aaa"></div>
<div class="ab" style="left:190px;top:0;width:2px;height:29px;background:#aaa"></div>
<div class="ab" style="left:288px;top:0;width:2px;height:29px;background:#aaa"></div>
</div>
<div class="ab" style="left:0;top:306px;width:250px;height:31px;border-bottom:2px solid #000">
<div class="ab" style="left:0px;top:0;width:46px;height:29px;background:#fff"></div>
<div class="ab" style="left:46px;top:0;width:41px;height:29px;background:#fff"></div>
<div class="ab" style="left:87px;top:0;width:104px;height:29px;background:#fff"><div class="t" style="left:5px;top:6.5px;font-size:13px;color:#0000ee;text-decoration:underline">1000358-000</div></div>
<div class="ab" style="left:191px;top:0;width:98px;height:29px;background:#fff"><div class="t" style="left:5px;top:6.5px;font-size:13px;color:#0000ee;">2025/03/01</div></div>
<div class="ab" style="left:45px;top:0;width:2px;height:29px;background:#aaa"></div>
<div class="ab" style="left:86px;top:0;width:2px;height:29px;background:#aaa"></div>
<div class="ab" style="left:190px;top:0;width:2px;height:29px;background:#aaa"></div>
<div class="ab" style="left:288px;top:0;width:2px;height:29px;background:#aaa"></div>
</div>
<div class="ab" style="left:0;top:337px;width:250px;height:31px;border-bottom:2px solid #000">
<div class="ab" style="left:0px;top:0;width:46px;height:29px;background:#fff"></div>
<div class="ab" style="left:46px;top:0;width:41px;height:29px;background:#fff"></div>
<div class="ab" style="left:87px;top:0;width:104px;height:29px;background:#fff"><div class="t" style="left:5px;top:6.5px;font-size:13px;color:#0000ee;text-decoration:underline">1000358-000</div></div>
<div class="ab" style="left:191px;top:0;width:98px;height:29px;background:#fff"><div class="t" style="left:5px;top:6.5px;font-size:13px;color:#0000ee;">2025/03/01</div></div>
<div class="ab" style="left:45px;top:0;width:2px;height:29px;background:#aaa"></div>
<div class="ab" style="left:86px;top:0;width:2px;height:29px;background:#aaa"></div>
<div class="ab" style="left:190px;top:0;width:2px;height:29px;background:#aaa"></div>
<div class="ab" style="left:288px;top:0;width:2px;height:29px;background:#aaa"></div>
</div>
<div class="ab" style="left:0;top:368px;width:250px;height:31px;border-bottom:2px solid #000">
<div class="ab" style="left:0px;top:0;width:46px;height:29px;background:#fff"></div>
<div class="ab" style="left:46px;top:0;width:41px;height:29px;background:#fff"></div>
<div class="ab" style="left:87px;top:0;width:104px;height:29px;background:#fff"><div class="t" style="left:5px;top:6.5px;font-size:13px;color:#0000ee;text-decoration:underline">1000358-000</div></div>
<div class="ab" style="left:191px;top:0;width:98px;height:29px;background:#fff"><div class="t" style="left:5px;top:6.5px;font-size:13px;color:#0000ee;">2025/03/01</div></div>
<div class="ab" style="left:45px;top:0;width:2px;height:29px;background:#aaa"></div>
<div class="ab" style="left:86px;top:0;width:2px;height:29px;background:#aaa"></div>
<div class="ab" style="left:190px;top:0;width:2px;height:29px;background:#aaa"></div>
<div class="ab" style="left:288px;top:0;width:2px;height:29px;background:#aaa"></div>
</div>
<div class="ab" style="left:0;top:399px;width:250px;height:31px;border-bottom:2px solid #000">
<div class="ab" style="left:0px;top:0;width:46px;height:29px;background:#fff"></div>
<div class="ab" style="left:46px;top:0;width:41px;height:29px;background:#fff"></div>
<div class="ab" style="left:87px;top:0;width:104px;height:29px;background:#fff"><div class="t" style="left:5px;top:6.5px;font-size:13px;color:#0000ee;text-decoration:underline">1000358-000</div></div>
<div class="ab" style="left:191px;top:0;width:98px;height:29px;background:#fff"><div class="t" style="left:5px;top:6.5px;font-size:13px;color:#0000ee;">2025/03/01</div></div>
<div class="ab" style="left:45px;top:0;width:2px;height:29px;background:#aaa"></div>
<div class="ab" style="left:86px;top:0;width:2px;height:29px;background:#aaa"></div>
<div class="ab" style="left:190px;top:0;width:2px;height:29px;background:#aaa"></div>
<div class="ab" style="left:288px;top:0;width:2px;height:29px;background:#aaa"></div>
</div>
<div class="ab" style="left:0;top:430px;width:250px;height:31px;border-bottom:2px solid #000">
<div class="ab" style="left:0px;top:0;width:46px;height:29px;background:#fff"></div>
<div class="ab" style="left:46px;top:0;width:41px;height:29px;background:#fff"></div>
<div class="ab" style="left:87px;top:0;width:104px;height:29px;background:#fff"><div class="t" style="left:5px;top:6.5px;font-size:13px;color:#0000ee;text-decoration:underline">1000358-000</div></div>
<div class="ab" style="left:191px;top:0;width:98px;height:29px;background:#fff"><div class="t" style="left:5px;top:6.5px;font-size:13px;color:#0000ee;">2025/03/01</div></div>
<div class="ab" style="left:45px;top:0;width:2px;height:29px;background:#aaa"></div>
<div class="ab" style="left:86px;top:0;width:2px;height:29px;background:#aaa"></div>
<div class="ab" style="left:190px;top:0;width:2px;height:29px;background:#aaa"></div>
<div class="ab" style="left:288px;top:0;width:2px;height:29px;background:#aaa"></div>
</div>
<div class="ab" style="left:0;top:461px;width:250px;height:31px;border-bottom:2px solid #000">
<div class="ab" style="left:0px;top:0;width:46px;height:29px;background:#fff"></div>
<div class="ab" style="left:46px;top:0;width:41px;height:29px;background:#fff"></div>
<div class="ab" style="left:87px;top:0;width:104px;height:29px;background:#fff"><div class="t" style="left:5px;top:6.5px;font-size:13px;color:#0000ee;text-decoration:underline">1000361-000</div></div>
<div class="ab" style="left:191px;top:0;width:98px;height:29px;background:#fff"><div class="t" style="left:5px;top:6.5px;font-size:13px;color:#0000ee;">2025/03/01</div></div>
<div class="ab" style="left:45px;top:0;width:2px;height:29px;background:#aaa"></div>
<div class="ab" style="left:86px;top:0;width:2px;height:29px;background:#aaa"></div>
<div class="ab" style="left:190px;top:0;width:2px;height:29px;background:#aaa"></div>
<div class="ab" style="left:288px;top:0;width:2px;height:29px;background:#aaa"></div>
</div>
</div>
</div>
<div class="t" style="left:336px;top:423px;font-size:11px;font-weight:bold;color:#555;line-height:16px">プロ<br>ジ...</div>
<div class="ab" style="left:533px;top:419px;width:237px;height:529px;overflow:hidden;background:#fff">
<div class="ab" style="left:0px;top:0;width:40px;height:41px;background:#e6e6e6;border-right:1px solid #a0a0a0"></div>
<div class="ab" style="left:40px;top:0;width:115px;height:41px;background:#e6e6e6;border-right:1px solid #a0a0a0"></div>
<div class="t" style="left:-3.0px;width:200px;text-align:center;top:15px;font-size:11px;font-weight:bold;color:#555">スタッフNO</div>
<div class="ab" style="left:155px;top:0;width:122px;height:41px;background:#e6e6e6;border-right:1px solid #a0a0a0"></div>
<div class="t" style="left:115.5px;width:200px;text-align:center;top:15px;font-size:11px;font-weight:bold;color:#555">スタッフ名</div>
<div class="ab" style="left:0;top:41px;width:237px;height:1px;background:#a0a0a0"></div>
<div class="ab" style="left:0;top:42px;width:237px;height:487px;overflow:hidden">
<div class="ab" style="left:0;top:-4px;width:237px;height:31px;border-bottom:2px solid #000">
<div class="ab" style="left:0px;top:0;width:40px;height:29px;background:#b3e5fc"></div>
<div class="ab" style="left:40px;top:0;width:115px;height:29px;background:#b3e5fc"><div class="t" style="left:5px;top:6.5px;font-size:13px;color:#333;">100044008</div></div>
<div class="ab" style="left:155px;top:0;width:122px;height:29px;background:#b3e5fc"><div class="t" style="left:5px;top:6.5px;font-size:13px;color:#222;">テス　裕介</div></div>
<div class="ab" style="left:39px;top:0;width:2px;height:29px;background:#aaa"></div>
<div class="ab" style="left:154px;top:0;width:2px;height:29px;background:#aaa"></div>
<div class="ab" style="left:276px;top:0;width:2px;height:29px;background:#aaa"></div>
</div>
<div class="ab" style="left:0;top:27px;width:237px;height:31px;border-bottom:2px solid #000">
<div class="ab" style="left:0px;top:0;width:40px;height:29px;background:#f44336"></div>
<div class="ab" style="left:40px;top:0;width:115px;height:29px;background:#fff"></div>
<div class="ab" style="left:155px;top:0;width:122px;height:29px;background:#f44336"></div>
<div class="ab" style="left:39px;top:0;width:2px;height:29px;background:#aaa"></div>
<div class="ab" style="left:154px;top:0;width:2px;height:29px;background:#aaa"></div>
<div class="ab" style="left:276px;top:0;width:2px;height:29px;background:#aaa"></div>
</div>
<div class="ab" style="left:0;top:58px;width:237px;height:31px;border-bottom:2px solid #000">
<div class="ab" style="left:0px;top:0;width:40px;height:29px;background:#f44336"></div>
<div class="ab" style="left:40px;top:0;width:115px;height:29px;background:#fff"></div>
<div class="ab" style="left:155px;top:0;width:122px;height:29px;background:#f44336"></div>
<div class="ab" style="left:39px;top:0;width:2px;height:29px;background:#aaa"></div>
<div class="ab" style="left:154px;top:0;width:2px;height:29px;background:#aaa"></div>
<div class="ab" style="left:276px;top:0;width:2px;height:29px;background:#aaa"></div>
</div>
<div class="ab" style="left:0;top:89px;width:237px;height:31px;border-bottom:2px solid #000">
<div class="ab" style="left:0px;top:0;width:40px;height:29px;background:#f44336"></div>
<div class="ab" style="left:40px;top:0;width:115px;height:29px;background:#fff"></div>
<div class="ab" style="left:155px;top:0;width:122px;height:29px;background:#f44336"></div>
<div class="ab" style="left:39px;top:0;width:2px;height:29px;background:#aaa"></div>
<div class="ab" style="left:154px;top:0;width:2px;height:29px;background:#aaa"></div>
<div class="ab" style="left:276px;top:0;width:2px;height:29px;background:#aaa"></div>
</div>
<div class="ab" style="left:0;top:120px;width:237px;height:31px;border-bottom:2px solid #000">
<div class="ab" style="left:0px;top:0;width:40px;height:29px;background:#f44336"></div>
<div class="ab" style="left:40px;top:0;width:115px;height:29px;background:#fff"></div>
<div class="ab" style="left:155px;top:0;width:122px;height:29px;background:#f44336"></div>
<div class="ab" style="left:39px;top:0;width:2px;height:29px;background:#aaa"></div>
<div class="ab" style="left:154px;top:0;width:2px;height:29px;background:#aaa"></div>
<div class="ab" style="left:276px;top:0;width:2px;height:29px;background:#aaa"></div>
</div>
<div class="ab" style="left:0;top:151px;width:237px;height:31px;border-bottom:2px solid #000">
<div class="ab" style="left:0px;top:0;width:40px;height:29px;background:#f44336"></div>
<div class="ab" style="left:40px;top:0;width:115px;height:29px;background:#fff"></div>
<div class="ab" style="left:155px;top:0;width:122px;height:29px;background:#f44336"></div>
<div class="ab" style="left:39px;top:0;width:2px;height:29px;background:#aaa"></div>
<div class="ab" style="left:154px;top:0;width:2px;height:29px;background:#aaa"></div>
<div class="ab" style="left:276px;top:0;width:2px;height:29px;background:#aaa"></div>
</div>
<div class="ab" style="left:0;top:182px;width:237px;height:31px;border-bottom:2px solid #000">
<div class="ab" style="left:0px;top:0;width:40px;height:29px;background:#f44336"></div>
<div class="ab" style="left:40px;top:0;width:115px;height:29px;background:#fff"></div>
<div class="ab" style="left:155px;top:0;width:122px;height:29px;background:#f44336"></div>
<div class="ab" style="left:39px;top:0;width:2px;height:29px;background:#aaa"></div>
<div class="ab" style="left:154px;top:0;width:2px;height:29px;background:#aaa"></div>
<div class="ab" style="left:276px;top:0;width:2px;height:29px;background:#aaa"></div>
</div>
<div class="ab" style="left:0;top:213px;width:237px;height:31px;border-bottom:2px solid #000">
<div class="ab" style="left:0px;top:0;width:40px;height:29px;background:#f44336"></div>
<div class="ab" style="left:40px;top:0;width:115px;height:29px;background:#fff"></div>
<div class="ab" style="left:155px;top:0;width:122px;height:29px;background:#f44336"></div>
<div class="ab" style="left:39px;top:0;width:2px;height:29px;background:#aaa"></div>
<div class="ab" style="left:154px;top:0;width:2px;height:29px;background:#aaa"></div>
<div class="ab" style="left:276px;top:0;width:2px;height:29px;background:#aaa"></div>
</div>
<div class="ab" style="left:0;top:244px;width:237px;height:31px;border-bottom:2px solid #000">
<div class="ab" style="left:0px;top:0;width:40px;height:29px;background:#b3e5fc"></div>
<div class="ab" style="left:40px;top:0;width:115px;height:29px;background:#b3e5fc"><div class="t" style="left:5px;top:6.5px;font-size:13px;color:#333;">100005733</div></div>
<div class="ab" style="left:155px;top:0;width:122px;height:29px;background:#b3e5fc"><div class="t" style="left:5px;top:6.5px;font-size:13px;color:#222;">テス　未来</div></div>
<div class="ab" style="left:39px;top:0;width:2px;height:29px;background:#aaa"></div>
<div class="ab" style="left:154px;top:0;width:2px;height:29px;background:#aaa"></div>
<div class="ab" style="left:276px;top:0;width:2px;height:29px;background:#aaa"></div>
</div>
<div class="ab" style="left:0;top:275px;width:237px;height:31px;border-bottom:2px solid #000">
<div class="ab" style="left:0px;top:0;width:40px;height:29px;background:#b3e5fc"></div>
<div class="ab" style="left:40px;top:0;width:115px;height:29px;background:#b3e5fc"><div class="t" style="left:5px;top:6.5px;font-size:13px;color:#333;">100036378</div></div>
<div class="ab" style="left:155px;top:0;width:122px;height:29px;background:#b3e5fc"><div class="t" style="left:5px;top:6.5px;font-size:13px;color:#222;">テス　祐介</div></div>
<div class="ab" style="left:39px;top:0;width:2px;height:29px;background:#aaa"></div>
<div class="ab" style="left:154px;top:0;width:2px;height:29px;background:#aaa"></div>
<div class="ab" style="left:276px;top:0;width:2px;height:29px;background:#aaa"></div>
</div>
<div class="ab" style="left:0;top:306px;width:237px;height:31px;border-bottom:2px solid #000">
<div class="ab" style="left:0px;top:0;width:40px;height:29px;background:#f44336"></div>
<div class="ab" style="left:40px;top:0;width:115px;height:29px;background:#fff"></div>
<div class="ab" style="left:155px;top:0;width:122px;height:29px;background:#f44336"></div>
<div class="ab" style="left:39px;top:0;width:2px;height:29px;background:#aaa"></div>
<div class="ab" style="left:154px;top:0;width:2px;height:29px;background:#aaa"></div>
<div class="ab" style="left:276px;top:0;width:2px;height:29px;background:#aaa"></div>
</div>
<div class="ab" style="left:0;top:337px;width:237px;height:31px;border-bottom:2px solid #000">
<div class="ab" style="left:0px;top:0;width:40px;height:29px;background:#f44336"></div>
<div class="ab" style="left:40px;top:0;width:115px;height:29px;background:#fff"></div>
<div class="ab" style="left:155px;top:0;width:122px;height:29px;background:#f44336"></div>
<div class="ab" style="left:39px;top:0;width:2px;height:29px;background:#aaa"></div>
<div class="ab" style="left:154px;top:0;width:2px;height:29px;background:#aaa"></div>
<div class="ab" style="left:276px;top:0;width:2px;height:29px;background:#aaa"></div>
</div>
<div class="ab" style="left:0;top:368px;width:237px;height:31px;border-bottom:2px solid #000">
<div class="ab" style="left:0px;top:0;width:40px;height:29px;background:#f44336"></div>
<div class="ab" style="left:40px;top:0;width:115px;height:29px;background:#fff"></div>
<div class="ab" style="left:155px;top:0;width:122px;height:29px;background:#f44336"></div>
<div class="ab" style="left:39px;top:0;width:2px;height:29px;background:#aaa"></div>
<div class="ab" style="left:154px;top:0;width:2px;height:29px;background:#aaa"></div>
<div class="ab" style="left:276px;top:0;width:2px;height:29px;background:#aaa"></div>
</div>
<div class="ab" style="left:0;top:399px;width:237px;height:31px;border-bottom:2px solid #000">
<div class="ab" style="left:0px;top:0;width:40px;height:29px;background:#f44336"></div>
<div class="ab" style="left:40px;top:0;width:115px;height:29px;background:#fff"></div>
<div class="ab" style="left:155px;top:0;width:122px;height:29px;background:#f44336"></div>
<div class="ab" style="left:39px;top:0;width:2px;height:29px;background:#aaa"></div>
<div class="ab" style="left:154px;top:0;width:2px;height:29px;background:#aaa"></div>
<div class="ab" style="left:276px;top:0;width:2px;height:29px;background:#aaa"></div>
</div>
<div class="ab" style="left:0;top:430px;width:237px;height:31px;border-bottom:2px solid #000">
<div class="ab" style="left:0px;top:0;width:40px;height:29px;background:#f44336"></div>
<div class="ab" style="left:40px;top:0;width:115px;height:29px;background:#fff"></div>
<div class="ab" style="left:155px;top:0;width:122px;height:29px;background:#f44336"></div>
<div class="ab" style="left:39px;top:0;width:2px;height:29px;background:#aaa"></div>
<div class="ab" style="left:154px;top:0;width:2px;height:29px;background:#aaa"></div>
<div class="ab" style="left:276px;top:0;width:2px;height:29px;background:#aaa"></div>
</div>
<div class="ab" style="left:0;top:461px;width:237px;height:31px;border-bottom:2px solid #000">
<div class="ab" style="left:0px;top:0;width:40px;height:29px;background:#b3e5fc"></div>
<div class="ab" style="left:40px;top:0;width:115px;height:29px;background:#b3e5fc"><div class="t" style="left:5px;top:6.5px;font-size:13px;color:#333;">100044008</div></div>
<div class="ab" style="left:155px;top:0;width:122px;height:29px;background:#b3e5fc"><div class="t" style="left:5px;top:6.5px;font-size:13px;color:#222;">テス　裕介</div></div>
<div class="ab" style="left:39px;top:0;width:2px;height:29px;background:#aaa"></div>
<div class="ab" style="left:154px;top:0;width:2px;height:29px;background:#aaa"></div>
<div class="ab" style="left:276px;top:0;width:2px;height:29px;background:#aaa"></div>
</div>
</div>
</div>
<div class="ab" style="left:772px;top:419px;width:554px;height:529px;overflow:hidden;background:#fff">
<div class="ab" style="left:0px;top:0;width:10px;height:41px;background:#e6e6e6;border-right:1px solid #a0a0a0"></div>
<div class="ab" style="left:10px;top:0;width:110px;height:41px;background:#e6e6e6;border-right:1px solid #a0a0a0"></div>
<div class="t" style="left:-35.5px;width:200px;text-align:center;top:15px;font-size:11px;font-weight:bold;color:#555">申請残休</div>
<div class="ab" style="left:120px;top:0;width:110px;height:41px;background:#e6e6e6;border-right:1px solid #a0a0a0"></div>
<div class="t" style="left:74.5px;width:200px;text-align:center;top:15px;font-size:11px;font-weight:bold;color:#555">申請深休</div>
<div class="ab" style="left:230px;top:0;width:110px;height:41px;background:#e6e6e6;border-right:1px solid #a0a0a0"></div>
<div class="t" style="left:184.5px;width:200px;text-align:center;top:15px;font-size:11px;font-weight:bold;color:#555">全体確認</div>
<div class="ab" style="left:340px;top:0;width:110px;height:41px;background:#ff99cc;border-right:1px solid #a0a0a0"></div>
<div class="t" style="left:294.5px;width:200px;text-align:center;top:15px;font-size:11px;font-weight:bold;color:#555">支給確認</div>
<div class="ab" style="left:450px;top:0;width:110px;height:41px;background:#ff99cc;border-right:1px solid #a0a0a0"></div>
<div class="t" style="left:404.5px;width:200px;text-align:center;top:15px;font-size:11px;font-weight:bold;color:#555">出勤区分(支給)</div>
<div class="ab" style="left:0;top:41px;width:554px;height:1px;background:#a0a0a0"></div>
<div class="ab" style="left:0;top:42px;width:554px;height:487px;overflow:hidden">
<div class="ab" style="left:0;top:-4px;width:554px;height:31px;border-bottom:2px solid #000">
<div class="ab" style="left:0px;top:0;width:10px;height:29px;background:#b3e5fc"></div>
<div class="ab" style="left:10px;top:0;width:110px;height:29px;background:#b3e5fc"></div>
<div class="ab" style="left:120px;top:0;width:110px;height:29px;background:#b3e5fc"></div>
<div class="ab" style="left:230px;top:0;width:110px;height:29px;background:#fff"><div class="ab" style="left:48px;top:7px;width:13px;height:13px;border:1px solid #767676;border-radius:2px;background:#fff"></div></div>
<div class="ab" style="left:340px;top:0;width:110px;height:29px;background:#fff"><div class="ab" style="left:48px;top:7px;width:13px;height:13px;border:1px solid #767676;border-radius:2px;background:#fff"></div></div>
<div class="ab" style="left:450px;top:0;width:110px;height:29px;background:#fff"><div class="t" style="left:4px;top:6.5px;font-size:13px;color:#222;">通常出勤</div><svg class="ic" style="left:90px;top:10px" width="11" height="7" viewBox="0 0 11 7"><path d="M1 1l4.5 4.5L10 1" fill="none" stroke="#222" stroke-width="1.6"/></svg></div>
<div class="ab" style="left:9px;top:0;width:2px;height:29px;background:#aaa"></div>
<div class="ab" style="left:119px;top:0;width:2px;height:29px;background:#aaa"></div>
<div class="ab" style="left:229px;top:0;width:2px;height:29px;background:#aaa"></div>
<div class="ab" style="left:339px;top:0;width:2px;height:29px;background:#aaa"></div>
<div class="ab" style="left:449px;top:0;width:2px;height:29px;background:#aaa"></div>
<div class="ab" style="left:559px;top:0;width:2px;height:29px;background:#aaa"></div>
</div>
<div class="ab" style="left:0;top:27px;width:554px;height:31px;border-bottom:2px solid #000">
<div class="ab" style="left:0px;top:0;width:10px;height:29px;background:#f44336"></div>
<div class="ab" style="left:10px;top:0;width:110px;height:29px;background:#f44336"></div>
<div class="ab" style="left:120px;top:0;width:110px;height:29px;background:#f44336"></div>
<div class="ab" style="left:230px;top:0;width:110px;height:29px;background:#f44336"><div class="ab" style="left:48px;top:7px;width:13px;height:13px;border-radius:2px;background:#f5bdb9"></div></div>
<div class="ab" style="left:340px;top:0;width:110px;height:29px;background:#f44336"><div class="ab" style="left:48px;top:7px;width:13px;height:13px;border-radius:2px;background:#f5bdb9"></div></div>
<div class="ab" style="left:450px;top:0;width:110px;height:29px;background:#fff"><div class="t" style="left:4px;top:6.5px;font-size:13px;color:#222;">通常出勤</div><svg class="ic" style="left:90px;top:10px" width="11" height="7" viewBox="0 0 11 7"><path d="M1 1l4.5 4.5L10 1" fill="none" stroke="#222" stroke-width="1.6"/></svg></div>
<div class="ab" style="left:9px;top:0;width:2px;height:29px;background:#aaa"></div>
<div class="ab" style="left:119px;top:0;width:2px;height:29px;background:#aaa"></div>
<div class="ab" style="left:229px;top:0;width:2px;height:29px;background:#aaa"></div>
<div class="ab" style="left:339px;top:0;width:2px;height:29px;background:#aaa"></div>
<div class="ab" style="left:449px;top:0;width:2px;height:29px;background:#aaa"></div>
<div class="ab" style="left:559px;top:0;width:2px;height:29px;background:#aaa"></div>
</div>
<div class="ab" style="left:0;top:58px;width:554px;height:31px;border-bottom:2px solid #000">
<div class="ab" style="left:0px;top:0;width:10px;height:29px;background:#f44336"></div>
<div class="ab" style="left:10px;top:0;width:110px;height:29px;background:#f44336"></div>
<div class="ab" style="left:120px;top:0;width:110px;height:29px;background:#f44336"></div>
<div class="ab" style="left:230px;top:0;width:110px;height:29px;background:#f44336"><div class="ab" style="left:48px;top:7px;width:13px;height:13px;border-radius:2px;background:#f5bdb9"></div></div>
<div class="ab" style="left:340px;top:0;width:110px;height:29px;background:#f44336"><div class="ab" style="left:48px;top:7px;width:13px;height:13px;border-radius:2px;background:#f5bdb9"></div></div>
<div class="ab" style="left:450px;top:0;width:110px;height:29px;background:#fff"><div class="t" style="left:4px;top:6.5px;font-size:13px;color:#222;">通常出勤</div><svg class="ic" style="left:90px;top:10px" width="11" height="7" viewBox="0 0 11 7"><path d="M1 1l4.5 4.5L10 1" fill="none" stroke="#222" stroke-width="1.6"/></svg></div>
<div class="ab" style="left:9px;top:0;width:2px;height:29px;background:#aaa"></div>
<div class="ab" style="left:119px;top:0;width:2px;height:29px;background:#aaa"></div>
<div class="ab" style="left:229px;top:0;width:2px;height:29px;background:#aaa"></div>
<div class="ab" style="left:339px;top:0;width:2px;height:29px;background:#aaa"></div>
<div class="ab" style="left:449px;top:0;width:2px;height:29px;background:#aaa"></div>
<div class="ab" style="left:559px;top:0;width:2px;height:29px;background:#aaa"></div>
</div>
<div class="ab" style="left:0;top:89px;width:554px;height:31px;border-bottom:2px solid #000">
<div class="ab" style="left:0px;top:0;width:10px;height:29px;background:#f44336"></div>
<div class="ab" style="left:10px;top:0;width:110px;height:29px;background:#f44336"></div>
<div class="ab" style="left:120px;top:0;width:110px;height:29px;background:#f44336"></div>
<div class="ab" style="left:230px;top:0;width:110px;height:29px;background:#f44336"><div class="ab" style="left:48px;top:7px;width:13px;height:13px;border-radius:2px;background:#f5bdb9"></div></div>
<div class="ab" style="left:340px;top:0;width:110px;height:29px;background:#f44336"><div class="ab" style="left:48px;top:7px;width:13px;height:13px;border-radius:2px;background:#f5bdb9"></div></div>
<div class="ab" style="left:450px;top:0;width:110px;height:29px;background:#fff"><div class="t" style="left:4px;top:6.5px;font-size:13px;color:#222;">通常出勤</div><svg class="ic" style="left:90px;top:10px" width="11" height="7" viewBox="0 0 11 7"><path d="M1 1l4.5 4.5L10 1" fill="none" stroke="#222" stroke-width="1.6"/></svg></div>
<div class="ab" style="left:9px;top:0;width:2px;height:29px;background:#aaa"></div>
<div class="ab" style="left:119px;top:0;width:2px;height:29px;background:#aaa"></div>
<div class="ab" style="left:229px;top:0;width:2px;height:29px;background:#aaa"></div>
<div class="ab" style="left:339px;top:0;width:2px;height:29px;background:#aaa"></div>
<div class="ab" style="left:449px;top:0;width:2px;height:29px;background:#aaa"></div>
<div class="ab" style="left:559px;top:0;width:2px;height:29px;background:#aaa"></div>
</div>
<div class="ab" style="left:0;top:120px;width:554px;height:31px;border-bottom:2px solid #000">
<div class="ab" style="left:0px;top:0;width:10px;height:29px;background:#f44336"></div>
<div class="ab" style="left:10px;top:0;width:110px;height:29px;background:#f44336"></div>
<div class="ab" style="left:120px;top:0;width:110px;height:29px;background:#f44336"></div>
<div class="ab" style="left:230px;top:0;width:110px;height:29px;background:#f44336"><div class="ab" style="left:48px;top:7px;width:13px;height:13px;border-radius:2px;background:#f5bdb9"></div></div>
<div class="ab" style="left:340px;top:0;width:110px;height:29px;background:#f44336"><div class="ab" style="left:48px;top:7px;width:13px;height:13px;border-radius:2px;background:#f5bdb9"></div></div>
<div class="ab" style="left:450px;top:0;width:110px;height:29px;background:#fff"><div class="t" style="left:4px;top:6.5px;font-size:13px;color:#222;">通常出勤</div><svg class="ic" style="left:90px;top:10px" width="11" height="7" viewBox="0 0 11 7"><path d="M1 1l4.5 4.5L10 1" fill="none" stroke="#222" stroke-width="1.6"/></svg></div>
<div class="ab" style="left:9px;top:0;width:2px;height:29px;background:#aaa"></div>
<div class="ab" style="left:119px;top:0;width:2px;height:29px;background:#aaa"></div>
<div class="ab" style="left:229px;top:0;width:2px;height:29px;background:#aaa"></div>
<div class="ab" style="left:339px;top:0;width:2px;height:29px;background:#aaa"></div>
<div class="ab" style="left:449px;top:0;width:2px;height:29px;background:#aaa"></div>
<div class="ab" style="left:559px;top:0;width:2px;height:29px;background:#aaa"></div>
</div>
<div class="ab" style="left:0;top:151px;width:554px;height:31px;border-bottom:2px solid #000">
<div class="ab" style="left:0px;top:0;width:10px;height:29px;background:#f44336"></div>
<div class="ab" style="left:10px;top:0;width:110px;height:29px;background:#f44336"></div>
<div class="ab" style="left:120px;top:0;width:110px;height:29px;background:#f44336"></div>
<div class="ab" style="left:230px;top:0;width:110px;height:29px;background:#f44336"><div class="ab" style="left:48px;top:7px;width:13px;height:13px;border-radius:2px;background:#f5bdb9"></div></div>
<div class="ab" style="left:340px;top:0;width:110px;height:29px;background:#f44336"><div class="ab" style="left:48px;top:7px;width:13px;height:13px;border-radius:2px;background:#f5bdb9"></div></div>
<div class="ab" style="left:450px;top:0;width:110px;height:29px;background:#fff"><div class="t" style="left:4px;top:6.5px;font-size:13px;color:#222;">通常出勤</div><svg class="ic" style="left:90px;top:10px" width="11" height="7" viewBox="0 0 11 7"><path d="M1 1l4.5 4.5L10 1" fill="none" stroke="#222" stroke-width="1.6"/></svg></div>
<div class="ab" style="left:9px;top:0;width:2px;height:29px;background:#aaa"></div>
<div class="ab" style="left:119px;top:0;width:2px;height:29px;background:#aaa"></div>
<div class="ab" style="left:229px;top:0;width:2px;height:29px;background:#aaa"></div>
<div class="ab" style="left:339px;top:0;width:2px;height:29px;background:#aaa"></div>
<div class="ab" style="left:449px;top:0;width:2px;height:29px;background:#aaa"></div>
<div class="ab" style="left:559px;top:0;width:2px;height:29px;background:#aaa"></div>
</div>
<div class="ab" style="left:0;top:182px;width:554px;height:31px;border-bottom:2px solid #000">
<div class="ab" style="left:0px;top:0;width:10px;height:29px;background:#f44336"></div>
<div class="ab" style="left:10px;top:0;width:110px;height:29px;background:#f44336"></div>
<div class="ab" style="left:120px;top:0;width:110px;height:29px;background:#f44336"></div>
<div class="ab" style="left:230px;top:0;width:110px;height:29px;background:#f44336"><div class="ab" style="left:48px;top:7px;width:13px;height:13px;border-radius:2px;background:#f5bdb9"></div></div>
<div class="ab" style="left:340px;top:0;width:110px;height:29px;background:#f44336"><div class="ab" style="left:48px;top:7px;width:13px;height:13px;border-radius:2px;background:#f5bdb9"></div></div>
<div class="ab" style="left:450px;top:0;width:110px;height:29px;background:#fff"><div class="t" style="left:4px;top:6.5px;font-size:13px;color:#222;">通常出勤</div><svg class="ic" style="left:90px;top:10px" width="11" height="7" viewBox="0 0 11 7"><path d="M1 1l4.5 4.5L10 1" fill="none" stroke="#222" stroke-width="1.6"/></svg></div>
<div class="ab" style="left:9px;top:0;width:2px;height:29px;background:#aaa"></div>
<div class="ab" style="left:119px;top:0;width:2px;height:29px;background:#aaa"></div>
<div class="ab" style="left:229px;top:0;width:2px;height:29px;background:#aaa"></div>
<div class="ab" style="left:339px;top:0;width:2px;height:29px;background:#aaa"></div>
<div class="ab" style="left:449px;top:0;width:2px;height:29px;background:#aaa"></div>
<div class="ab" style="left:559px;top:0;width:2px;height:29px;background:#aaa"></div>
</div>
<div class="ab" style="left:0;top:213px;width:554px;height:31px;border-bottom:2px solid #000">
<div class="ab" style="left:0px;top:0;width:10px;height:29px;background:#f44336"></div>
<div class="ab" style="left:10px;top:0;width:110px;height:29px;background:#f44336"></div>
<div class="ab" style="left:120px;top:0;width:110px;height:29px;background:#f44336"></div>
<div class="ab" style="left:230px;top:0;width:110px;height:29px;background:#f44336"><div class="ab" style="left:48px;top:7px;width:13px;height:13px;border-radius:2px;background:#f5bdb9"></div></div>
<div class="ab" style="left:340px;top:0;width:110px;height:29px;background:#f44336"><div class="ab" style="left:48px;top:7px;width:13px;height:13px;border-radius:2px;background:#f5bdb9"></div></div>
<div class="ab" style="left:450px;top:0;width:110px;height:29px;background:#fff"><div class="t" style="left:4px;top:6.5px;font-size:13px;color:#222;">通常出勤</div><svg class="ic" style="left:90px;top:10px" width="11" height="7" viewBox="0 0 11 7"><path d="M1 1l4.5 4.5L10 1" fill="none" stroke="#222" stroke-width="1.6"/></svg></div>
<div class="ab" style="left:9px;top:0;width:2px;height:29px;background:#aaa"></div>
<div class="ab" style="left:119px;top:0;width:2px;height:29px;background:#aaa"></div>
<div class="ab" style="left:229px;top:0;width:2px;height:29px;background:#aaa"></div>
<div class="ab" style="left:339px;top:0;width:2px;height:29px;background:#aaa"></div>
<div class="ab" style="left:449px;top:0;width:2px;height:29px;background:#aaa"></div>
<div class="ab" style="left:559px;top:0;width:2px;height:29px;background:#aaa"></div>
</div>
<div class="ab" style="left:0;top:244px;width:554px;height:31px;border-bottom:2px solid #000">
<div class="ab" style="left:0px;top:0;width:10px;height:29px;background:#b3e5fc"></div>
<div class="ab" style="left:10px;top:0;width:110px;height:29px;background:#b3e5fc"></div>
<div class="ab" style="left:120px;top:0;width:110px;height:29px;background:#b3e5fc"></div>
<div class="ab" style="left:230px;top:0;width:110px;height:29px;background:#fff"><div class="ab" style="left:48px;top:7px;width:13px;height:13px;border:1px solid #767676;border-radius:2px;background:#fff"></div></div>
<div class="ab" style="left:340px;top:0;width:110px;height:29px;background:#fff"><div class="ab" style="left:48px;top:7px;width:13px;height:13px;border:1px solid #767676;border-radius:2px;background:#fff"></div></div>
<div class="ab" style="left:450px;top:0;width:110px;height:29px;background:#fff"><div class="t" style="left:4px;top:6.5px;font-size:13px;color:#222;">通常出勤</div><svg class="ic" style="left:90px;top:10px" width="11" height="7" viewBox="0 0 11 7"><path d="M1 1l4.5 4.5L10 1" fill="none" stroke="#222" stroke-width="1.6"/></svg></div>
<div class="ab" style="left:9px;top:0;width:2px;height:29px;background:#aaa"></div>
<div class="ab" style="left:119px;top:0;width:2px;height:29px;background:#aaa"></div>
<div class="ab" style="left:229px;top:0;width:2px;height:29px;background:#aaa"></div>
<div class="ab" style="left:339px;top:0;width:2px;height:29px;background:#aaa"></div>
<div class="ab" style="left:449px;top:0;width:2px;height:29px;background:#aaa"></div>
<div class="ab" style="left:559px;top:0;width:2px;height:29px;background:#aaa"></div>
</div>
<div class="ab" style="left:0;top:275px;width:554px;height:31px;border-bottom:2px solid #000">
<div class="ab" style="left:0px;top:0;width:10px;height:29px;background:#b3e5fc"></div>
<div class="ab" style="left:10px;top:0;width:110px;height:29px;background:#b3e5fc"></div>
<div class="ab" style="left:120px;top:0;width:110px;height:29px;background:#b3e5fc"></div>
<div class="ab" style="left:230px;top:0;width:110px;height:29px;background:#fff"><div class="ab" style="left:48px;top:7px;width:13px;height:13px;border:1px solid #767676;border-radius:2px;background:#fff"></div></div>
<div class="ab" style="left:340px;top:0;width:110px;height:29px;background:#fff"><div class="ab" style="left:48px;top:7px;width:13px;height:13px;border:1px solid #767676;border-radius:2px;background:#fff"></div></div>
<div class="ab" style="left:450px;top:0;width:110px;height:29px;background:#fff"><div class="t" style="left:4px;top:6.5px;font-size:13px;color:#222;">通常出勤</div><svg class="ic" style="left:90px;top:10px" width="11" height="7" viewBox="0 0 11 7"><path d="M1 1l4.5 4.5L10 1" fill="none" stroke="#222" stroke-width="1.6"/></svg></div>
<div class="ab" style="left:9px;top:0;width:2px;height:29px;background:#aaa"></div>
<div class="ab" style="left:119px;top:0;width:2px;height:29px;background:#aaa"></div>
<div class="ab" style="left:229px;top:0;width:2px;height:29px;background:#aaa"></div>
<div class="ab" style="left:339px;top:0;width:2px;height:29px;background:#aaa"></div>
<div class="ab" style="left:449px;top:0;width:2px;height:29px;background:#aaa"></div>
<div class="ab" style="left:559px;top:0;width:2px;height:29px;background:#aaa"></div>
</div>
<div class="ab" style="left:0;top:306px;width:554px;height:31px;border-bottom:2px solid #000">
<div class="ab" style="left:0px;top:0;width:10px;height:29px;background:#f44336"></div>
<div class="ab" style="left:10px;top:0;width:110px;height:29px;background:#f44336"></div>
<div class="ab" style="left:120px;top:0;width:110px;height:29px;background:#f44336"></div>
<div class="ab" style="left:230px;top:0;width:110px;height:29px;background:#f44336"><div class="ab" style="left:48px;top:7px;width:13px;height:13px;border-radius:2px;background:#f5bdb9"></div></div>
<div class="ab" style="left:340px;top:0;width:110px;height:29px;background:#f44336"><div class="ab" style="left:48px;top:7px;width:13px;height:13px;border-radius:2px;background:#f5bdb9"></div></div>
<div class="ab" style="left:450px;top:0;width:110px;height:29px;background:#fff"><div class="t" style="left:4px;top:6.5px;font-size:13px;color:#222;">通常出勤</div><svg class="ic" style="left:90px;top:10px" width="11" height="7" viewBox="0 0 11 7"><path d="M1 1l4.5 4.5L10 1" fill="none" stroke="#222" stroke-width="1.6"/></svg></div>
<div class="ab" style="left:9px;top:0;width:2px;height:29px;background:#aaa"></div>
<div class="ab" style="left:119px;top:0;width:2px;height:29px;background:#aaa"></div>
<div class="ab" style="left:229px;top:0;width:2px;height:29px;background:#aaa"></div>
<div class="ab" style="left:339px;top:0;width:2px;height:29px;background:#aaa"></div>
<div class="ab" style="left:449px;top:0;width:2px;height:29px;background:#aaa"></div>
<div class="ab" style="left:559px;top:0;width:2px;height:29px;background:#aaa"></div>
</div>
<div class="ab" style="left:0;top:337px;width:554px;height:31px;border-bottom:2px solid #000">
<div class="ab" style="left:0px;top:0;width:10px;height:29px;background:#f44336"></div>
<div class="ab" style="left:10px;top:0;width:110px;height:29px;background:#f44336"></div>
<div class="ab" style="left:120px;top:0;width:110px;height:29px;background:#f44336"></div>
<div class="ab" style="left:230px;top:0;width:110px;height:29px;background:#f44336"><div class="ab" style="left:48px;top:7px;width:13px;height:13px;border-radius:2px;background:#f5bdb9"></div></div>
<div class="ab" style="left:340px;top:0;width:110px;height:29px;background:#f44336"><div class="ab" style="left:48px;top:7px;width:13px;height:13px;border-radius:2px;background:#f5bdb9"></div></div>
<div class="ab" style="left:450px;top:0;width:110px;height:29px;background:#fff"><div class="t" style="left:4px;top:6.5px;font-size:13px;color:#222;">通常出勤</div><svg class="ic" style="left:90px;top:10px" width="11" height="7" viewBox="0 0 11 7"><path d="M1 1l4.5 4.5L10 1" fill="none" stroke="#222" stroke-width="1.6"/></svg></div>
<div class="ab" style="left:9px;top:0;width:2px;height:29px;background:#aaa"></div>
<div class="ab" style="left:119px;top:0;width:2px;height:29px;background:#aaa"></div>
<div class="ab" style="left:229px;top:0;width:2px;height:29px;background:#aaa"></div>
<div class="ab" style="left:339px;top:0;width:2px;height:29px;background:#aaa"></div>
<div class="ab" style="left:449px;top:0;width:2px;height:29px;background:#aaa"></div>
<div class="ab" style="left:559px;top:0;width:2px;height:29px;background:#aaa"></div>
</div>
<div class="ab" style="left:0;top:368px;width:554px;height:31px;border-bottom:2px solid #000">
<div class="ab" style="left:0px;top:0;width:10px;height:29px;background:#f44336"></div>
<div class="ab" style="left:10px;top:0;width:110px;height:29px;background:#f44336"></div>
<div class="ab" style="left:120px;top:0;width:110px;height:29px;background:#f44336"></div>
<div class="ab" style="left:230px;top:0;width:110px;height:29px;background:#f44336"><div class="ab" style="left:48px;top:7px;width:13px;height:13px;border-radius:2px;background:#f5bdb9"></div></div>
<div class="ab" style="left:340px;top:0;width:110px;height:29px;background:#f44336"><div class="ab" style="left:48px;top:7px;width:13px;height:13px;border-radius:2px;background:#f5bdb9"></div></div>
<div class="ab" style="left:450px;top:0;width:110px;height:29px;background:#fff"><div class="t" style="left:4px;top:6.5px;font-size:13px;color:#222;">通常出勤</div><svg class="ic" style="left:90px;top:10px" width="11" height="7" viewBox="0 0 11 7"><path d="M1 1l4.5 4.5L10 1" fill="none" stroke="#222" stroke-width="1.6"/></svg></div>
<div class="ab" style="left:9px;top:0;width:2px;height:29px;background:#aaa"></div>
<div class="ab" style="left:119px;top:0;width:2px;height:29px;background:#aaa"></div>
<div class="ab" style="left:229px;top:0;width:2px;height:29px;background:#aaa"></div>
<div class="ab" style="left:339px;top:0;width:2px;height:29px;background:#aaa"></div>
<div class="ab" style="left:449px;top:0;width:2px;height:29px;background:#aaa"></div>
<div class="ab" style="left:559px;top:0;width:2px;height:29px;background:#aaa"></div>
</div>
<div class="ab" style="left:0;top:399px;width:554px;height:31px;border-bottom:2px solid #000">
<div class="ab" style="left:0px;top:0;width:10px;height:29px;background:#f44336"></div>
<div class="ab" style="left:10px;top:0;width:110px;height:29px;background:#f44336"></div>
<div class="ab" style="left:120px;top:0;width:110px;height:29px;background:#f44336"></div>
<div class="ab" style="left:230px;top:0;width:110px;height:29px;background:#f44336"><div class="ab" style="left:48px;top:7px;width:13px;height:13px;border-radius:2px;background:#f5bdb9"></div></div>
<div class="ab" style="left:340px;top:0;width:110px;height:29px;background:#f44336"><div class="ab" style="left:48px;top:7px;width:13px;height:13px;border-radius:2px;background:#f5bdb9"></div></div>
<div class="ab" style="left:450px;top:0;width:110px;height:29px;background:#fff"><div class="t" style="left:4px;top:6.5px;font-size:13px;color:#222;">通常出勤</div><svg class="ic" style="left:90px;top:10px" width="11" height="7" viewBox="0 0 11 7"><path d="M1 1l4.5 4.5L10 1" fill="none" stroke="#222" stroke-width="1.6"/></svg></div>
<div class="ab" style="left:9px;top:0;width:2px;height:29px;background:#aaa"></div>
<div class="ab" style="left:119px;top:0;width:2px;height:29px;background:#aaa"></div>
<div class="ab" style="left:229px;top:0;width:2px;height:29px;background:#aaa"></div>
<div class="ab" style="left:339px;top:0;width:2px;height:29px;background:#aaa"></div>
<div class="ab" style="left:449px;top:0;width:2px;height:29px;background:#aaa"></div>
<div class="ab" style="left:559px;top:0;width:2px;height:29px;background:#aaa"></div>
</div>
<div class="ab" style="left:0;top:430px;width:554px;height:31px;border-bottom:2px solid #000">
<div class="ab" style="left:0px;top:0;width:10px;height:29px;background:#f44336"></div>
<div class="ab" style="left:10px;top:0;width:110px;height:29px;background:#f44336"></div>
<div class="ab" style="left:120px;top:0;width:110px;height:29px;background:#f44336"></div>
<div class="ab" style="left:230px;top:0;width:110px;height:29px;background:#f44336"><div class="ab" style="left:48px;top:7px;width:13px;height:13px;border-radius:2px;background:#f5bdb9"></div></div>
<div class="ab" style="left:340px;top:0;width:110px;height:29px;background:#f44336"><div class="ab" style="left:48px;top:7px;width:13px;height:13px;border-radius:2px;background:#f5bdb9"></div></div>
<div class="ab" style="left:450px;top:0;width:110px;height:29px;background:#fff"><div class="t" style="left:4px;top:6.5px;font-size:13px;color:#222;">通常出勤</div><svg class="ic" style="left:90px;top:10px" width="11" height="7" viewBox="0 0 11 7"><path d="M1 1l4.5 4.5L10 1" fill="none" stroke="#222" stroke-width="1.6"/></svg></div>
<div class="ab" style="left:9px;top:0;width:2px;height:29px;background:#aaa"></div>
<div class="ab" style="left:119px;top:0;width:2px;height:29px;background:#aaa"></div>
<div class="ab" style="left:229px;top:0;width:2px;height:29px;background:#aaa"></div>
<div class="ab" style="left:339px;top:0;width:2px;height:29px;background:#aaa"></div>
<div class="ab" style="left:449px;top:0;width:2px;height:29px;background:#aaa"></div>
<div class="ab" style="left:559px;top:0;width:2px;height:29px;background:#aaa"></div>
</div>
<div class="ab" style="left:0;top:461px;width:554px;height:31px;border-bottom:2px solid #000">
<div class="ab" style="left:0px;top:0;width:10px;height:29px;background:#b3e5fc"></div>
<div class="ab" style="left:10px;top:0;width:110px;height:29px;background:#b3e5fc"></div>
<div class="ab" style="left:120px;top:0;width:110px;height:29px;background:#b3e5fc"></div>
<div class="ab" style="left:230px;top:0;width:110px;height:29px;background:#fff"><div class="ab" style="left:48px;top:7px;width:13px;height:13px;border:1px solid #767676;border-radius:2px;background:#fff"></div></div>
<div class="ab" style="left:340px;top:0;width:110px;height:29px;background:#fff"><div class="ab" style="left:48px;top:7px;width:13px;height:13px;border:1px solid #767676;border-radius:2px;background:#fff"></div></div>
<div class="ab" style="left:450px;top:0;width:110px;height:29px;background:#fff"><div class="t" style="left:4px;top:6.5px;font-size:13px;color:#222;">通常出勤</div><svg class="ic" style="left:90px;top:10px" width="11" height="7" viewBox="0 0 11 7"><path d="M1 1l4.5 4.5L10 1" fill="none" stroke="#222" stroke-width="1.6"/></svg></div>
<div class="ab" style="left:9px;top:0;width:2px;height:29px;background:#aaa"></div>
<div class="ab" style="left:119px;top:0;width:2px;height:29px;background:#aaa"></div>
<div class="ab" style="left:229px;top:0;width:2px;height:29px;background:#aaa"></div>
<div class="ab" style="left:339px;top:0;width:2px;height:29px;background:#aaa"></div>
<div class="ab" style="left:449px;top:0;width:2px;height:29px;background:#aaa"></div>
<div class="ab" style="left:559px;top:0;width:2px;height:29px;background:#aaa"></div>
</div>
</div>
</div>
<div class="ab" style="left:1329px;top:419px;width:579px;height:529px;overflow:hidden;background:#fff">
<div class="ab" style="left:0px;top:0;width:30px;height:41px;background:#ff99cc;border-right:1px solid #a0a0a0"></div>
<div class="ab" style="left:30px;top:0;width:100px;height:41px;background:#ff99cc;border-right:1px solid #a0a0a0"></div>
<div class="t" style="left:-20.5px;width:200px;text-align:center;top:15px;font-size:11px;font-weight:bold;color:#555">eos</div>
<div class="ab" style="left:130px;top:0;width:110px;height:41px;background:#ff99cc;border-right:1px solid #a0a0a0"></div>
<div class="t" style="left:84.5px;width:200px;text-align:center;top:15px;font-size:11px;font-weight:bold;color:#555">食費</div>
<div class="ab" style="left:240px;top:0;width:110px;height:41px;background:#ff99cc;border-right:1px solid #a0a0a0"></div>
<div class="t" style="left:194.5px;width:200px;text-align:center;top:15px;font-size:11px;font-weight:bold;color:#555">その他控除</div>
<div class="ab" style="left:350px;top:0;width:110px;height:41px;background:#ff99cc;border-right:1px solid #a0a0a0"></div>
<div class="t" style="left:304.5px;width:200px;text-align:center;top:15px;font-size:11px;font-weight:bold;color:#555">社会保険料調整</div>
<div class="ab" style="left:460px;top:0;width:110px;height:41px;background:#ff99cc;border-right:1px solid #a0a0a0"></div>
<div class="t" style="left:414.5px;width:200px;text-align:center;top:15px;font-size:11px;font-weight:bold;color:#555">雇用保険料調整</div>
<div class="ab" style="left:570px;top:0;width:92px;height:41px;background:#ff99cc;border-right:1px solid #a0a0a0"></div>
<div class="ab" style="left:0;top:41px;width:579px;height:1px;background:#a0a0a0"></div>
<div class="ab" style="left:0;top:42px;width:579px;height:487px;overflow:hidden">
<div class="ab" style="left:0;top:-4px;width:579px;height:31px;border-bottom:2px solid #000">
<div class="ab" style="left:0px;top:0;width:30px;height:29px;background:#fff"></div>
<div class="ab" style="left:30px;top:0;width:100px;height:29px;background:#fff"></div>
<div class="ab" style="left:130px;top:0;width:110px;height:29px;background:#fff"><div class="t" style="left:5px;top:6.5px;font-size:13px;color:#222;">0</div></div>
<div class="ab" style="left:240px;top:0;width:110px;height:29px;background:#fff"><div class="t" style="left:5px;top:6.5px;font-size:13px;color:#222;">0</div></div>
<div class="ab" style="left:350px;top:0;width:110px;height:29px;background:#fff"><div class="t" style="left:5px;top:6.5px;font-size:13px;color:#222;">0</div></div>
<div class="ab" style="left:460px;top:0;width:110px;height:29px;background:#fff"><div class="t" style="left:5px;top:6.5px;font-size:13px;color:#222;">0</div></div>
<div class="ab" style="left:570px;top:0;width:92px;height:29px;background:#fff"></div>
<div class="ab" style="left:29px;top:0;width:2px;height:29px;background:#aaa"></div>
<div class="ab" style="left:129px;top:0;width:2px;height:29px;background:#aaa"></div>
<div class="ab" style="left:239px;top:0;width:2px;height:29px;background:#aaa"></div>
<div class="ab" style="left:349px;top:0;width:2px;height:29px;background:#aaa"></div>
<div class="ab" style="left:459px;top:0;width:2px;height:29px;background:#aaa"></div>
<div class="ab" style="left:569px;top:0;width:2px;height:29px;background:#aaa"></div>
<div class="ab" style="left:661px;top:0;width:2px;height:29px;background:#aaa"></div>
</div>
<div class="ab" style="left:0;top:27px;width:579px;height:31px;border-bottom:2px solid #000">
<div class="ab" style="left:0px;top:0;width:30px;height:29px;background:#fff"></div>
<div class="ab" style="left:30px;top:0;width:100px;height:29px;background:#fff"></div>
<div class="ab" style="left:130px;top:0;width:110px;height:29px;background:#fff"><div class="t" style="left:5px;top:6.5px;font-size:13px;color:#222;">0</div></div>
<div class="ab" style="left:240px;top:0;width:110px;height:29px;background:#fff"><div class="t" style="left:5px;top:6.5px;font-size:13px;color:#222;">0</div></div>
<div class="ab" style="left:350px;top:0;width:110px;height:29px;background:#fff"><div class="t" style="left:5px;top:6.5px;font-size:13px;color:#222;">0</div></div>
<div class="ab" style="left:460px;top:0;width:110px;height:29px;background:#fff"><div class="t" style="left:5px;top:6.5px;font-size:13px;color:#222;">0</div></div>
<div class="ab" style="left:570px;top:0;width:92px;height:29px;background:#fff"></div>
<div class="ab" style="left:29px;top:0;width:2px;height:29px;background:#aaa"></div>
<div class="ab" style="left:129px;top:0;width:2px;height:29px;background:#aaa"></div>
<div class="ab" style="left:239px;top:0;width:2px;height:29px;background:#aaa"></div>
<div class="ab" style="left:349px;top:0;width:2px;height:29px;background:#aaa"></div>
<div class="ab" style="left:459px;top:0;width:2px;height:29px;background:#aaa"></div>
<div class="ab" style="left:569px;top:0;width:2px;height:29px;background:#aaa"></div>
<div class="ab" style="left:661px;top:0;width:2px;height:29px;background:#aaa"></div>
</div>
<div class="ab" style="left:0;top:58px;width:579px;height:31px;border-bottom:2px solid #000">
<div class="ab" style="left:0px;top:0;width:30px;height:29px;background:#fff"></div>
<div class="ab" style="left:30px;top:0;width:100px;height:29px;background:#fff"></div>
<div class="ab" style="left:130px;top:0;width:110px;height:29px;background:#fff"><div class="t" style="left:5px;top:6.5px;font-size:13px;color:#222;">0</div></div>
<div class="ab" style="left:240px;top:0;width:110px;height:29px;background:#fff"><div class="t" style="left:5px;top:6.5px;font-size:13px;color:#222;">0</div></div>
<div class="ab" style="left:350px;top:0;width:110px;height:29px;background:#fff"><div class="t" style="left:5px;top:6.5px;font-size:13px;color:#222;">0</div></div>
<div class="ab" style="left:460px;top:0;width:110px;height:29px;background:#fff"><div class="t" style="left:5px;top:6.5px;font-size:13px;color:#222;">0</div></div>
<div class="ab" style="left:570px;top:0;width:92px;height:29px;background:#fff"></div>
<div class="ab" style="left:29px;top:0;width:2px;height:29px;background:#aaa"></div>
<div class="ab" style="left:129px;top:0;width:2px;height:29px;background:#aaa"></div>
<div class="ab" style="left:239px;top:0;width:2px;height:29px;background:#aaa"></div>
<div class="ab" style="left:349px;top:0;width:2px;height:29px;background:#aaa"></div>
<div class="ab" style="left:459px;top:0;width:2px;height:29px;background:#aaa"></div>
<div class="ab" style="left:569px;top:0;width:2px;height:29px;background:#aaa"></div>
<div class="ab" style="left:661px;top:0;width:2px;height:29px;background:#aaa"></div>
</div>
<div class="ab" style="left:0;top:89px;width:579px;height:31px;border-bottom:2px solid #000">
<div class="ab" style="left:0px;top:0;width:30px;height:29px;background:#fff"></div>
<div class="ab" style="left:30px;top:0;width:100px;height:29px;background:#fff"></div>
<div class="ab" style="left:130px;top:0;width:110px;height:29px;background:#fff"><div class="t" style="left:5px;top:6.5px;font-size:13px;color:#222;">0</div></div>
<div class="ab" style="left:240px;top:0;width:110px;height:29px;background:#fff"><div class="t" style="left:5px;top:6.5px;font-size:13px;color:#222;">0</div></div>
<div class="ab" style="left:350px;top:0;width:110px;height:29px;background:#fff"><div class="t" style="left:5px;top:6.5px;font-size:13px;color:#222;">0</div></div>
<div class="ab" style="left:460px;top:0;width:110px;height:29px;background:#fff"><div class="t" style="left:5px;top:6.5px;font-size:13px;color:#222;">0</div></div>
<div class="ab" style="left:570px;top:0;width:92px;height:29px;background:#fff"></div>
<div class="ab" style="left:29px;top:0;width:2px;height:29px;background:#aaa"></div>
<div class="ab" style="left:129px;top:0;width:2px;height:29px;background:#aaa"></div>
<div class="ab" style="left:239px;top:0;width:2px;height:29px;background:#aaa"></div>
<div class="ab" style="left:349px;top:0;width:2px;height:29px;background:#aaa"></div>
<div class="ab" style="left:459px;top:0;width:2px;height:29px;background:#aaa"></div>
<div class="ab" style="left:569px;top:0;width:2px;height:29px;background:#aaa"></div>
<div class="ab" style="left:661px;top:0;width:2px;height:29px;background:#aaa"></div>
</div>
<div class="ab" style="left:0;top:120px;width:579px;height:31px;border-bottom:2px solid #000">
<div class="ab" style="left:0px;top:0;width:30px;height:29px;background:#fff"></div>
<div class="ab" style="left:30px;top:0;width:100px;height:29px;background:#fff"></div>
<div class="ab" style="left:130px;top:0;width:110px;height:29px;background:#fff"><div class="t" style="left:5px;top:6.5px;font-size:13px;color:#222;">0</div></div>
<div class="ab" style="left:240px;top:0;width:110px;height:29px;background:#fff"><div class="t" style="left:5px;top:6.5px;font-size:13px;color:#222;">0</div></div>
<div class="ab" style="left:350px;top:0;width:110px;height:29px;background:#fff"><div class="t" style="left:5px;top:6.5px;font-size:13px;color:#222;">0</div></div>
<div class="ab" style="left:460px;top:0;width:110px;height:29px;background:#fff"><div class="t" style="left:5px;top:6.5px;font-size:13px;color:#222;">0</div></div>
<div class="ab" style="left:570px;top:0;width:92px;height:29px;background:#fff"></div>
<div class="ab" style="left:29px;top:0;width:2px;height:29px;background:#aaa"></div>
<div class="ab" style="left:129px;top:0;width:2px;height:29px;background:#aaa"></div>
<div class="ab" style="left:239px;top:0;width:2px;height:29px;background:#aaa"></div>
<div class="ab" style="left:349px;top:0;width:2px;height:29px;background:#aaa"></div>
<div class="ab" style="left:459px;top:0;width:2px;height:29px;background:#aaa"></div>
<div class="ab" style="left:569px;top:0;width:2px;height:29px;background:#aaa"></div>
<div class="ab" style="left:661px;top:0;width:2px;height:29px;background:#aaa"></div>
</div>
<div class="ab" style="left:0;top:151px;width:579px;height:31px;border-bottom:2px solid #000">
<div class="ab" style="left:0px;top:0;width:30px;height:29px;background:#fff"></div>
<div class="ab" style="left:30px;top:0;width:100px;height:29px;background:#fff"></div>
<div class="ab" style="left:130px;top:0;width:110px;height:29px;background:#fff"><div class="t" style="left:5px;top:6.5px;font-size:13px;color:#222;">0</div></div>
<div class="ab" style="left:240px;top:0;width:110px;height:29px;background:#fff"><div class="t" style="left:5px;top:6.5px;font-size:13px;color:#222;">0</div></div>
<div class="ab" style="left:350px;top:0;width:110px;height:29px;background:#fff"><div class="t" style="left:5px;top:6.5px;font-size:13px;color:#222;">0</div></div>
<div class="ab" style="left:460px;top:0;width:110px;height:29px;background:#fff"><div class="t" style="left:5px;top:6.5px;font-size:13px;color:#222;">0</div></div>
<div class="ab" style="left:570px;top:0;width:92px;height:29px;background:#fff"></div>
<div class="ab" style="left:29px;top:0;width:2px;height:29px;background:#aaa"></div>
<div class="ab" style="left:129px;top:0;width:2px;height:29px;background:#aaa"></div>
<div class="ab" style="left:239px;top:0;width:2px;height:29px;background:#aaa"></div>
<div class="ab" style="left:349px;top:0;width:2px;height:29px;background:#aaa"></div>
<div class="ab" style="left:459px;top:0;width:2px;height:29px;background:#aaa"></div>
<div class="ab" style="left:569px;top:0;width:2px;height:29px;background:#aaa"></div>
<div class="ab" style="left:661px;top:0;width:2px;height:29px;background:#aaa"></div>
</div>
<div class="ab" style="left:0;top:182px;width:579px;height:31px;border-bottom:2px solid #000">
<div class="ab" style="left:0px;top:0;width:30px;height:29px;background:#fff"></div>
<div class="ab" style="left:30px;top:0;width:100px;height:29px;background:#fff"></div>
<div class="ab" style="left:130px;top:0;width:110px;height:29px;background:#fff"><div class="t" style="left:5px;top:6.5px;font-size:13px;color:#222;">0</div></div>
<div class="ab" style="left:240px;top:0;width:110px;height:29px;background:#fff"><div class="t" style="left:5px;top:6.5px;font-size:13px;color:#222;">0</div></div>
<div class="ab" style="left:350px;top:0;width:110px;height:29px;background:#fff"><div class="t" style="left:5px;top:6.5px;font-size:13px;color:#222;">0</div></div>
<div class="ab" style="left:460px;top:0;width:110px;height:29px;background:#fff"><div class="t" style="left:5px;top:6.5px;font-size:13px;color:#222;">0</div></div>
<div class="ab" style="left:570px;top:0;width:92px;height:29px;background:#fff"></div>
<div class="ab" style="left:29px;top:0;width:2px;height:29px;background:#aaa"></div>
<div class="ab" style="left:129px;top:0;width:2px;height:29px;background:#aaa"></div>
<div class="ab" style="left:239px;top:0;width:2px;height:29px;background:#aaa"></div>
<div class="ab" style="left:349px;top:0;width:2px;height:29px;background:#aaa"></div>
<div class="ab" style="left:459px;top:0;width:2px;height:29px;background:#aaa"></div>
<div class="ab" style="left:569px;top:0;width:2px;height:29px;background:#aaa"></div>
<div class="ab" style="left:661px;top:0;width:2px;height:29px;background:#aaa"></div>
</div>
<div class="ab" style="left:0;top:213px;width:579px;height:31px;border-bottom:2px solid #000">
<div class="ab" style="left:0px;top:0;width:30px;height:29px;background:#fff"></div>
<div class="ab" style="left:30px;top:0;width:100px;height:29px;background:#fff"></div>
<div class="ab" style="left:130px;top:0;width:110px;height:29px;background:#fff"><div class="t" style="left:5px;top:6.5px;font-size:13px;color:#222;">0</div></div>
<div class="ab" style="left:240px;top:0;width:110px;height:29px;background:#fff"><div class="t" style="left:5px;top:6.5px;font-size:13px;color:#222;">0</div></div>
<div class="ab" style="left:350px;top:0;width:110px;height:29px;background:#fff"><div class="t" style="left:5px;top:6.5px;font-size:13px;color:#222;">0</div></div>
<div class="ab" style="left:460px;top:0;width:110px;height:29px;background:#fff"><div class="t" style="left:5px;top:6.5px;font-size:13px;color:#222;">0</div></div>
<div class="ab" style="left:570px;top:0;width:92px;height:29px;background:#fff"></div>
<div class="ab" style="left:29px;top:0;width:2px;height:29px;background:#aaa"></div>
<div class="ab" style="left:129px;top:0;width:2px;height:29px;background:#aaa"></div>
<div class="ab" style="left:239px;top:0;width:2px;height:29px;background:#aaa"></div>
<div class="ab" style="left:349px;top:0;width:2px;height:29px;background:#aaa"></div>
<div class="ab" style="left:459px;top:0;width:2px;height:29px;background:#aaa"></div>
<div class="ab" style="left:569px;top:0;width:2px;height:29px;background:#aaa"></div>
<div class="ab" style="left:661px;top:0;width:2px;height:29px;background:#aaa"></div>
</div>
<div class="ab" style="left:0;top:244px;width:579px;height:31px;border-bottom:2px solid #000">
<div class="ab" style="left:0px;top:0;width:30px;height:29px;background:#fff"></div>
<div class="ab" style="left:30px;top:0;width:100px;height:29px;background:#fff"></div>
<div class="ab" style="left:130px;top:0;width:110px;height:29px;background:#fff"><div class="t" style="left:5px;top:6.5px;font-size:13px;color:#222;">0</div></div>
<div class="ab" style="left:240px;top:0;width:110px;height:29px;background:#fff"><div class="t" style="left:5px;top:6.5px;font-size:13px;color:#222;">0</div></div>
<div class="ab" style="left:350px;top:0;width:110px;height:29px;background:#fff"><div class="t" style="left:5px;top:6.5px;font-size:13px;color:#222;">0</div></div>
<div class="ab" style="left:460px;top:0;width:110px;height:29px;background:#fff"><div class="t" style="left:5px;top:6.5px;font-size:13px;color:#222;">0</div></div>
<div class="ab" style="left:570px;top:0;width:92px;height:29px;background:#fff"></div>
<div class="ab" style="left:29px;top:0;width:2px;height:29px;background:#aaa"></div>
<div class="ab" style="left:129px;top:0;width:2px;height:29px;background:#aaa"></div>
<div class="ab" style="left:239px;top:0;width:2px;height:29px;background:#aaa"></div>
<div class="ab" style="left:349px;top:0;width:2px;height:29px;background:#aaa"></div>
<div class="ab" style="left:459px;top:0;width:2px;height:29px;background:#aaa"></div>
<div class="ab" style="left:569px;top:0;width:2px;height:29px;background:#aaa"></div>
<div class="ab" style="left:661px;top:0;width:2px;height:29px;background:#aaa"></div>
</div>
<div class="ab" style="left:0;top:275px;width:579px;height:31px;border-bottom:2px solid #000">
<div class="ab" style="left:0px;top:0;width:30px;height:29px;background:#fff"></div>
<div class="ab" style="left:30px;top:0;width:100px;height:29px;background:#fff"></div>
<div class="ab" style="left:130px;top:0;width:110px;height:29px;background:#fff"><div class="t" style="left:5px;top:6.5px;font-size:13px;color:#222;">0</div></div>
<div class="ab" style="left:240px;top:0;width:110px;height:29px;background:#fff"><div class="t" style="left:5px;top:6.5px;font-size:13px;color:#222;">0</div></div>
<div class="ab" style="left:350px;top:0;width:110px;height:29px;background:#fff"><div class="t" style="left:5px;top:6.5px;font-size:13px;color:#222;">0</div></div>
<div class="ab" style="left:460px;top:0;width:110px;height:29px;background:#fff"><div class="t" style="left:5px;top:6.5px;font-size:13px;color:#222;">0</div></div>
<div class="ab" style="left:570px;top:0;width:92px;height:29px;background:#fff"></div>
<div class="ab" style="left:29px;top:0;width:2px;height:29px;background:#aaa"></div>
<div class="ab" style="left:129px;top:0;width:2px;height:29px;background:#aaa"></div>
<div class="ab" style="left:239px;top:0;width:2px;height:29px;background:#aaa"></div>
<div class="ab" style="left:349px;top:0;width:2px;height:29px;background:#aaa"></div>
<div class="ab" style="left:459px;top:0;width:2px;height:29px;background:#aaa"></div>
<div class="ab" style="left:569px;top:0;width:2px;height:29px;background:#aaa"></div>
<div class="ab" style="left:661px;top:0;width:2px;height:29px;background:#aaa"></div>
</div>
<div class="ab" style="left:0;top:306px;width:579px;height:31px;border-bottom:2px solid #000">
<div class="ab" style="left:0px;top:0;width:30px;height:29px;background:#fff"></div>
<div class="ab" style="left:30px;top:0;width:100px;height:29px;background:#fff"></div>
<div class="ab" style="left:130px;top:0;width:110px;height:29px;background:#fff"><div class="t" style="left:5px;top:6.5px;font-size:13px;color:#222;">0</div></div>
<div class="ab" style="left:240px;top:0;width:110px;height:29px;background:#fff"><div class="t" style="left:5px;top:6.5px;font-size:13px;color:#222;">0</div></div>
<div class="ab" style="left:350px;top:0;width:110px;height:29px;background:#fff"><div class="t" style="left:5px;top:6.5px;font-size:13px;color:#222;">0</div></div>
<div class="ab" style="left:460px;top:0;width:110px;height:29px;background:#fff"><div class="t" style="left:5px;top:6.5px;font-size:13px;color:#222;">0</div></div>
<div class="ab" style="left:570px;top:0;width:92px;height:29px;background:#fff"></div>
<div class="ab" style="left:29px;top:0;width:2px;height:29px;background:#aaa"></div>
<div class="ab" style="left:129px;top:0;width:2px;height:29px;background:#aaa"></div>
<div class="ab" style="left:239px;top:0;width:2px;height:29px;background:#aaa"></div>
<div class="ab" style="left:349px;top:0;width:2px;height:29px;background:#aaa"></div>
<div class="ab" style="left:459px;top:0;width:2px;height:29px;background:#aaa"></div>
<div class="ab" style="left:569px;top:0;width:2px;height:29px;background:#aaa"></div>
<div class="ab" style="left:661px;top:0;width:2px;height:29px;background:#aaa"></div>
</div>
<div class="ab" style="left:0;top:337px;width:579px;height:31px;border-bottom:2px solid #000">
<div class="ab" style="left:0px;top:0;width:30px;height:29px;background:#fff"></div>
<div class="ab" style="left:30px;top:0;width:100px;height:29px;background:#fff"></div>
<div class="ab" style="left:130px;top:0;width:110px;height:29px;background:#fff"><div class="t" style="left:5px;top:6.5px;font-size:13px;color:#222;">0</div></div>
<div class="ab" style="left:240px;top:0;width:110px;height:29px;background:#fff"><div class="t" style="left:5px;top:6.5px;font-size:13px;color:#222;">0</div></div>
<div class="ab" style="left:350px;top:0;width:110px;height:29px;background:#fff"><div class="t" style="left:5px;top:6.5px;font-size:13px;color:#222;">0</div></div>
<div class="ab" style="left:460px;top:0;width:110px;height:29px;background:#fff"><div class="t" style="left:5px;top:6.5px;font-size:13px;color:#222;">0</div></div>
<div class="ab" style="left:570px;top:0;width:92px;height:29px;background:#fff"></div>
<div class="ab" style="left:29px;top:0;width:2px;height:29px;background:#aaa"></div>
<div class="ab" style="left:129px;top:0;width:2px;height:29px;background:#aaa"></div>
<div class="ab" style="left:239px;top:0;width:2px;height:29px;background:#aaa"></div>
<div class="ab" style="left:349px;top:0;width:2px;height:29px;background:#aaa"></div>
<div class="ab" style="left:459px;top:0;width:2px;height:29px;background:#aaa"></div>
<div class="ab" style="left:569px;top:0;width:2px;height:29px;background:#aaa"></div>
<div class="ab" style="left:661px;top:0;width:2px;height:29px;background:#aaa"></div>
</div>
<div class="ab" style="left:0;top:368px;width:579px;height:31px;border-bottom:2px solid #000">
<div class="ab" style="left:0px;top:0;width:30px;height:29px;background:#fff"></div>
<div class="ab" style="left:30px;top:0;width:100px;height:29px;background:#fff"></div>
<div class="ab" style="left:130px;top:0;width:110px;height:29px;background:#fff"><div class="t" style="left:5px;top:6.5px;font-size:13px;color:#222;">0</div></div>
<div class="ab" style="left:240px;top:0;width:110px;height:29px;background:#fff"><div class="t" style="left:5px;top:6.5px;font-size:13px;color:#222;">0</div></div>
<div class="ab" style="left:350px;top:0;width:110px;height:29px;background:#fff"><div class="t" style="left:5px;top:6.5px;font-size:13px;color:#222;">0</div></div>
<div class="ab" style="left:460px;top:0;width:110px;height:29px;background:#fff"><div class="t" style="left:5px;top:6.5px;font-size:13px;color:#222;">0</div></div>
<div class="ab" style="left:570px;top:0;width:92px;height:29px;background:#fff"></div>
<div class="ab" style="left:29px;top:0;width:2px;height:29px;background:#aaa"></div>
<div class="ab" style="left:129px;top:0;width:2px;height:29px;background:#aaa"></div>
<div class="ab" style="left:239px;top:0;width:2px;height:29px;background:#aaa"></div>
<div class="ab" style="left:349px;top:0;width:2px;height:29px;background:#aaa"></div>
<div class="ab" style="left:459px;top:0;width:2px;height:29px;background:#aaa"></div>
<div class="ab" style="left:569px;top:0;width:2px;height:29px;background:#aaa"></div>
<div class="ab" style="left:661px;top:0;width:2px;height:29px;background:#aaa"></div>
</div>
<div class="ab" style="left:0;top:399px;width:579px;height:31px;border-bottom:2px solid #000">
<div class="ab" style="left:0px;top:0;width:30px;height:29px;background:#fff"></div>
<div class="ab" style="left:30px;top:0;width:100px;height:29px;background:#fff"></div>
<div class="ab" style="left:130px;top:0;width:110px;height:29px;background:#fff"><div class="t" style="left:5px;top:6.5px;font-size:13px;color:#222;">0</div></div>
<div class="ab" style="left:240px;top:0;width:110px;height:29px;background:#fff"><div class="t" style="left:5px;top:6.5px;font-size:13px;color:#222;">0</div></div>
<div class="ab" style="left:350px;top:0;width:110px;height:29px;background:#fff"><div class="t" style="left:5px;top:6.5px;font-size:13px;color:#222;">0</div></div>
<div class="ab" style="left:460px;top:0;width:110px;height:29px;background:#fff"><div class="t" style="left:5px;top:6.5px;font-size:13px;color:#222;">0</div></div>
<div class="ab" style="left:570px;top:0;width:92px;height:29px;background:#fff"></div>
<div class="ab" style="left:29px;top:0;width:2px;height:29px;background:#aaa"></div>
<div class="ab" style="left:129px;top:0;width:2px;height:29px;background:#aaa"></div>
<div class="ab" style="left:239px;top:0;width:2px;height:29px;background:#aaa"></div>
<div class="ab" style="left:349px;top:0;width:2px;height:29px;background:#aaa"></div>
<div class="ab" style="left:459px;top:0;width:2px;height:29px;background:#aaa"></div>
<div class="ab" style="left:569px;top:0;width:2px;height:29px;background:#aaa"></div>
<div class="ab" style="left:661px;top:0;width:2px;height:29px;background:#aaa"></div>
</div>
<div class="ab" style="left:0;top:430px;width:579px;height:31px;border-bottom:2px solid #000">
<div class="ab" style="left:0px;top:0;width:30px;height:29px;background:#fff"></div>
<div class="ab" style="left:30px;top:0;width:100px;height:29px;background:#fff"></div>
<div class="ab" style="left:130px;top:0;width:110px;height:29px;background:#fff"><div class="t" style="left:5px;top:6.5px;font-size:13px;color:#222;">0</div></div>
<div class="ab" style="left:240px;top:0;width:110px;height:29px;background:#fff"><div class="t" style="left:5px;top:6.5px;font-size:13px;color:#222;">0</div></div>
<div class="ab" style="left:350px;top:0;width:110px;height:29px;background:#fff"><div class="t" style="left:5px;top:6.5px;font-size:13px;color:#222;">0</div></div>
<div class="ab" style="left:460px;top:0;width:110px;height:29px;background:#fff"><div class="t" style="left:5px;top:6.5px;font-size:13px;color:#222;">0</div></div>
<div class="ab" style="left:570px;top:0;width:92px;height:29px;background:#fff"></div>
<div class="ab" style="left:29px;top:0;width:2px;height:29px;background:#aaa"></div>
<div class="ab" style="left:129px;top:0;width:2px;height:29px;background:#aaa"></div>
<div class="ab" style="left:239px;top:0;width:2px;height:29px;background:#aaa"></div>
<div class="ab" style="left:349px;top:0;width:2px;height:29px;background:#aaa"></div>
<div class="ab" style="left:459px;top:0;width:2px;height:29px;background:#aaa"></div>
<div class="ab" style="left:569px;top:0;width:2px;height:29px;background:#aaa"></div>
<div class="ab" style="left:661px;top:0;width:2px;height:29px;background:#aaa"></div>
</div>
<div class="ab" style="left:0;top:461px;width:579px;height:31px;border-bottom:2px solid #000">
<div class="ab" style="left:0px;top:0;width:30px;height:29px;background:#fff"></div>
<div class="ab" style="left:30px;top:0;width:100px;height:29px;background:#fff"></div>
<div class="ab" style="left:130px;top:0;width:110px;height:29px;background:#fff"><div class="t" style="left:5px;top:6.5px;font-size:13px;color:#222;">0</div></div>
<div class="ab" style="left:240px;top:0;width:110px;height:29px;background:#fff"><div class="t" style="left:5px;top:6.5px;font-size:13px;color:#222;">0</div></div>
<div class="ab" style="left:350px;top:0;width:110px;height:29px;background:#fff"><div class="t" style="left:5px;top:6.5px;font-size:13px;color:#222;">0</div></div>
<div class="ab" style="left:460px;top:0;width:110px;height:29px;background:#fff"><div class="t" style="left:5px;top:6.5px;font-size:13px;color:#222;">0</div></div>
<div class="ab" style="left:570px;top:0;width:92px;height:29px;background:#fff"></div>
<div class="ab" style="left:29px;top:0;width:2px;height:29px;background:#aaa"></div>
<div class="ab" style="left:129px;top:0;width:2px;height:29px;background:#aaa"></div>
<div class="ab" style="left:239px;top:0;width:2px;height:29px;background:#aaa"></div>
<div class="ab" style="left:349px;top:0;width:2px;height:29px;background:#aaa"></div>
<div class="ab" style="left:459px;top:0;width:2px;height:29px;background:#aaa"></div>
<div class="ab" style="left:569px;top:0;width:2px;height:29px;background:#aaa"></div>
<div class="ab" style="left:661px;top:0;width:2px;height:29px;background:#aaa"></div>
</div>
</div>
</div>
<div class="ab" style="left:1898px;top:461px;width:10px;height:487px;background:#fafafa"></div>
<div class="ab" style="left:1900px;top:589px;width:6px;height:40px;border-radius:3px;background:#888"></div>
<div class="ab" style="left:1899px;top:463px;width:0;height:0;border-left:4px solid transparent;border-right:4px solid transparent;border-bottom:5px solid #777"></div>
<div class="ab" style="left:1899px;top:940px;width:0;height:0;border-left:4px solid transparent;border-right:4px solid transparent;border-top:5px solid #777"></div>
<div class="ab" style="left:280px;top:948px;width:250px;height:10px;background:#f8f8f8"></div>
<div class="ab" style="left:289px;top:951px;width:12px;height:5px;border-radius:3px;background:#8a8a8a"></div>
<div class="ab" style="left:281px;top:949px;width:0;height:0;border-top:4px solid transparent;border-bottom:4px solid transparent;border-right:5px solid #999"></div>
<div class="ab" style="left:523px;top:949px;width:0;height:0;border-top:4px solid transparent;border-bottom:4px solid transparent;border-left:5px solid #999"></div>
<div class="ab" style="left:533px;top:948px;width:237px;height:10px;background:#f8f8f8"></div>
<div class="ab" style="left:563px;top:951px;width:12px;height:5px;border-radius:3px;background:#8a8a8a"></div>
<div class="ab" style="left:534px;top:949px;width:0;height:0;border-top:4px solid transparent;border-bottom:4px solid transparent;border-right:5px solid #999"></div>
<div class="ab" style="left:763px;top:949px;width:0;height:0;border-top:4px solid transparent;border-bottom:4px solid transparent;border-left:5px solid #999"></div>
<div class="ab" style="left:772px;top:948px;width:554px;height:10px;background:#f8f8f8"></div>
<div class="ab" style="left:951px;top:951px;width:12px;height:5px;border-radius:3px;background:#8a8a8a"></div>
<div class="ab" style="left:773px;top:949px;width:0;height:0;border-top:4px solid transparent;border-bottom:4px solid transparent;border-right:5px solid #999"></div>
<div class="ab" style="left:1319px;top:949px;width:0;height:0;border-top:4px solid transparent;border-bottom:4px solid transparent;border-left:5px solid #999"></div>
<div class="ab" style="left:1329px;top:948px;width:569px;height:10px;background:#f8f8f8"></div>
<div class="ab" style="left:1659px;top:951px;width:12px;height:5px;border-radius:3px;background:#8a8a8a"></div>
<div class="ab" style="left:1330px;top:949px;width:0;height:0;border-top:4px solid transparent;border-bottom:4px solid transparent;border-right:5px solid #999"></div>
<div class="ab" style="left:1891px;top:949px;width:0;height:0;border-top:4px solid transparent;border-bottom:4px solid transparent;border-left:5px solid #999"></div>
<div class="ab" style="left:280px;top:958px;width:1628px;height:1px;background:#b8b8b8"></div>
<div class="ab" style="left:280px;top:959px;width:1628px;height:10px;background:#e4e4e4"></div>
<div class="ab" style="left:277px;top:419px;width:3px;height:550px;background:#000;border-top-left-radius:4px 6px;"></div>
<div class="ab" style="left:530px;top:419px;width:3px;height:550px;background:#000;"></div>
<div class="ab" style="left:769px;top:419px;width:3px;height:550px;background:#000;"></div>
<div class="ab" style="left:1326px;top:419px;width:3px;height:550px;background:#000;"></div>
<div class="btn" style="left:1613px;top:978px;width:76px;height:36px;background:#79c6e1">行追加</div>
<div class="btn" style="left:1701px;top:978px;width:76px;height:36px;background:#0b96c6">再計算</div>
<div class="btn" style="left:1789px;top:978px;width:119px;height:36px;background:#0b96c6">エクスポート</div>
<div class="ab" style="left:302px;top:1056px;width:17px;height:17px;border-radius:2px;background:#222"><svg width="17" height="17" viewBox="0 0 17 17" style="position:absolute;left:0;top:0"><path d="M3 8.8l3.6 3.4 7.2-7.4" fill="none" stroke="#fff" stroke-width="2.2"/></svg></div>
<div class="t" style="left:332px;top:1056.5px;font-size:15px;color:#555">支給<span style="display:inline-block;width:15px;height:15px;position:relative;vertical-align:top"><svg width="15" height="15" viewBox="0 0 15 15" style="position:absolute;left:0;top:0"><path d="M0.5 8.5h13M10 5.5l3.5 3-3.5 3" fill="none" stroke="#555" stroke-width="1"/></svg></span>請求連動</div>
<div class="t" style="left:469px;top:1059.5px;font-size:12px;font-weight:bold;color:#111">一括チェック</div>
<div class="ab" style="left:571px;top:1056px;width:17px;height:17px;border-radius:2px;border:2px solid #666;background:#fff"></div>
<div class="t" style="left:601px;top:1056.5px;font-size:15px;color:#555">チェック(活性) 1</div>
<div class="ab" style="left:744px;top:1056px;width:17px;height:17px;border-radius:2px;border:2px solid #666;background:#fff"></div>
<div class="t" style="left:774px;top:1056.5px;font-size:15px;color:#555">チェック(活性) 2</div>
<div class="ab" style="left:917px;top:1056px;width:17px;height:17px;border-radius:2px;border:2px solid #666;background:#fff"></div>
<div class="t" style="left:947px;top:1056.5px;font-size:15px;color:#555">チェック(活性) 3</div>
<div class="ab" style="left:1090px;top:1056px;width:17px;height:17px;border-radius:2px;border:2px solid #666;background:#fff"></div>
<div class="t" style="left:1120px;top:1056.5px;font-size:15px;color:#555">チェック(活性) 4</div>
<div class="ab" style="left:1263px;top:1056px;width:17px;height:17px;border-radius:2px;border:2px solid #666;background:#fff"></div>
<div class="t" style="left:1293px;top:1056.5px;font-size:15px;color:#555">チェック(活性) 5</div>
<div class="ab" style="left:1436px;top:1056px;width:17px;height:17px;border-radius:2px;border:2px solid #666;background:#fff"></div>
<div class="t" style="left:1466px;top:1056.5px;font-size:15px;color:#555">チェック(活性) 6</div>
<div class="ab" style="left:1609px;top:1056px;width:17px;height:17px;border-radius:2px;border:2px solid #666;background:#fff"></div>
<div class="t" style="left:1639px;top:1056.5px;font-size:15px;color:#555">チェック(活性) 7</div>
<div class="ab" style="left:302px;top:1096px;width:17px;height:17px;border-radius:2px;border:2px solid #666;background:#fff"></div>
<div class="t" style="left:332px;top:1096.5px;font-size:15px;color:#555">チェック(活性) 8</div>
<div class="ab" style="left:475px;top:1096px;width:17px;height:17px;border-radius:2px;border:2px solid #666;background:#fff"></div>
<div class="t" style="left:505px;top:1096.5px;font-size:15px;color:#555">チェック(活性) 9</div>
<div class="ab" style="left:648px;top:1096px;width:17px;height:17px;border-radius:2px;border:2px solid #666;background:#fff"></div>
<div class="t" style="left:678px;top:1096.5px;font-size:15px;color:#555">チェック(活性) 10</div>
<div class="ab" style="left:830px;top:1096px;width:17px;height:17px;border-radius:2px;border:2px solid #666;background:#fff"></div>
<div class="t" style="left:860px;top:1096.5px;font-size:15px;color:#555">全体確認</div>
<div class="ab" style="left:949px;top:1096px;width:17px;height:17px;border-radius:2px;border:2px solid #666;background:#fff"></div>
<div class="t" style="left:979px;top:1096.5px;font-size:15px;color:#555">支給確認</div>
<div class="ab" style="left:1068px;top:1096px;width:17px;height:17px;border-radius:2px;border:2px solid #666;background:#fff"></div>
<div class="t" style="left:1098px;top:1096.5px;font-size:15px;color:#555">請求確認</div>
<div class="ab" style="left:1188px;top:1096px;width:17px;height:17px;border-radius:2px;border:2px solid #666;background:#fff"></div>
<div class="t" style="left:1218px;top:1096.5px;font-size:15px;color:#555">チェック(不活性) 1</div>
<div class="ab" style="left:1376px;top:1096px;width:17px;height:17px;border-radius:2px;border:2px solid #666;background:#fff"></div>
<div class="t" style="left:1406px;top:1096.5px;font-size:15px;color:#555">チェック(不活性) 2</div>
<div class="ab" style="left:1564px;top:1096px;width:17px;height:17px;border-radius:2px;border:2px solid #666;background:#fff"></div>
<div class="t" style="left:1594px;top:1096.5px;font-size:15px;color:#555">チェック(不活性) 3</div>
<div class="ab" style="left:302px;top:1136px;width:17px;height:17px;border-radius:2px;border:2px solid #666;background:#fff"></div>
<div class="t" style="left:332px;top:1136.5px;font-size:15px;color:#555">チェック(不活性) 4</div>
<div class="ab" style="left:490px;top:1136px;width:17px;height:17px;border-radius:2px;border:2px solid #666;background:#fff"></div>
<div class="t" style="left:520px;top:1136.5px;font-size:15px;color:#555">チェック(不活性) 5</div>
<div class="ab" style="left:294px;top:1210px;width:1604px;height:93px;border:1px solid #000;background:#000"></div>
<div class="ab" style="left:295px;top:1211px;width:93px;height:29px;background:#fff;border:0"></div>
<div class="t" style="left:294px;width:95px;text-align:center;top:1221px;font-size:11px;font-weight:bold;color:#555">案件件数</div>
<div class="ab" style="left:295px;top:1242px;width:93px;height:60px;background:#f4f4f4"></div>
<div class="t" style="left:306px;top:1264px;font-size:16px;color:#222">12</div>
<div class="ab" style="left:390px;top:1211px;width:92px;height:29px;background:#fff;border:0"></div>
<div class="t" style="left:389px;width:94px;text-align:center;top:1221px;font-size:11px;font-weight:bold;color:#555">配置合計</div>
<div class="ab" style="left:390px;top:1242px;width:92px;height:60px;background:#f4f4f4"></div>
<div class="t" style="left:401px;top:1264px;font-size:16px;color:#222">180</div>
<div class="ab" style="left:484px;top:1211px;width:92px;height:29px;background:#f44336;border:0"></div>
<div class="t" style="left:483px;width:94px;text-align:center;top:1221px;font-size:11px;font-weight:bold;color:#555">未配置</div>
<div class="ab" style="left:484px;top:1242px;width:92px;height:60px;background:#f4f4f4"></div>
<div class="t" style="left:495px;top:1264px;font-size:16px;color:#222">155</div>
<div class="ab" style="left:578px;top:1211px;width:92px;height:29px;background:#ff80ab;border:0"></div>
<div class="t" style="left:577px;width:94px;text-align:center;top:1221px;font-size:11px;font-weight:bold;color:#555">確認中</div>
<div class="ab" style="left:578px;top:1242px;width:92px;height:60px;background:#f4f4f4"></div>
<div class="t" style="left:589px;top:1264px;font-size:16px;color:#222">3</div>
<div class="ab" style="left:672px;top:1211px;width:93px;height:29px;background:#b3e5fc;border:0"></div>
<div class="t" style="left:671px;width:95px;text-align:center;top:1221px;font-size:11px;font-weight:bold;color:#555">配置済</div>
<div class="ab" style="left:672px;top:1242px;width:93px;height:60px;background:#f4f4f4"></div>
<div class="t" style="left:683px;top:1264px;font-size:16px;color:#222">22</div>
<div class="ab" style="left:767px;top:1211px;width:92px;height:29px;background:#fff;border:0"></div>
<div class="t" style="left:766px;width:94px;text-align:center;top:1221px;font-size:11px;font-weight:bold;color:#555">残</div>
<div class="ab" style="left:767px;top:1242px;width:92px;height:60px;background:#f4f4f4"></div>
<div class="t" style="left:778px;top:1264px;font-size:16px;color:#222">155</div>
<div class="ab" style="left:861px;top:1211px;width:92px;height:29px;background:#bdbdbd;border:0"></div>
<div class="t" style="left:860px;width:94px;text-align:center;top:1221px;font-size:11px;font-weight:bold;color:#555">中止</div>
<div class="ab" style="left:861px;top:1242px;width:92px;height:60px;background:#f4f4f4"></div>
<div class="t" style="left:872px;top:1264px;font-size:16px;color:#222">0</div>
<div class="ab" style="left:955px;top:1211px;width:92px;height:29px;background:#eeeeee;border:0"></div>
<div class="t" style="left:954px;width:94px;text-align:center;top:1221px;font-size:11px;font-weight:bold;color:#555">連絡欠勤</div>
<div class="ab" style="left:955px;top:1242px;width:92px;height:60px;background:#f4f4f4"></div>
<div class="t" style="left:966px;top:1264px;font-size:16px;color:#222">0</div>
<div class="ab" style="left:1049px;top:1211px;width:92px;height:29px;background:#fff;border:0"></div>
<div class="t" style="left:1048px;width:94px;text-align:center;top:1221px;font-size:11px;font-weight:bold;color:#555">無断欠勤</div>
<div class="ab" style="left:1049px;top:1242px;width:92px;height:60px;background:#f4f4f4"></div>
<div class="t" style="left:1060px;top:1264px;font-size:16px;color:#222">0</div>
<div class="ab" style="left:1143px;top:1211px;width:92px;height:29px;background:#ff80ab;border:0"></div>
<div class="t" style="left:1142px;width:94px;text-align:center;top:1221px;font-size:11px;font-weight:bold;color:#555">総支給金額</div>
<div class="ab" style="left:1143px;top:1242px;width:92px;height:60px;background:#f4f4f4"></div>
<div class="t" style="left:1154px;top:1264px;font-size:16px;color:#222">238,994</div>
<div class="ab" style="left:1237px;top:1211px;width:93px;height:29px;background:#9999ff;border:0"></div>
<div class="t" style="left:1236px;width:95px;text-align:center;top:1221px;font-size:11px;font-weight:bold;color:#555">請求金額</div>
<div class="ab" style="left:1237px;top:1242px;width:93px;height:60px;background:#f4f4f4"></div>
<div class="t" style="left:1248px;top:1264px;font-size:16px;color:#222">4,064</div>
<div class="ab" style="left:1332px;top:1211px;width:92px;height:29px;background:#ffffbb;border:0"></div>
<div class="t" style="left:1331px;width:94px;text-align:center;top:1221px;font-size:11px;font-weight:bold;color:#555">粗利益</div>
<div class="ab" style="left:1332px;top:1242px;width:92px;height:60px;background:#f4f4f4"></div>
<div class="t" style="left:1343px;top:1264px;font-size:16px;color:#222">-234,930</div>
<div class="ab" style="left:1426px;top:1211px;width:92px;height:29px;background:#ffffbb;border:0"></div>
<div class="t" style="left:1425px;width:94px;text-align:center;top:1221px;font-size:11px;font-weight:bold;color:#555">粗利率</div>
<div class="ab" style="left:1426px;top:1242px;width:92px;height:60px;background:#f4f4f4"></div>
<div class="t" style="left:1437px;top:1264px;font-size:16px;color:#222">-5,780.75</div>
<div class="ab" style="left:1520px;top:1211px;width:92px;height:29px;background:#ff80ab;border:0"></div>
<div class="t" style="left:1519px;width:94px;text-align:center;top:1221px;font-size:11px;font-weight:bold;color:#555">総支給金額</div>
<div class="ab" style="left:1520px;top:1242px;width:92px;height:60px;background:#f4f4f4"></div>
<div class="t" style="left:1531px;top:1264px;font-size:16px;color:#222">1,732,045</div>
<div class="ab" style="left:1614px;top:1211px;width:93px;height:29px;background:#9999ff;border:0"></div>
<div class="t" style="left:1613px;width:95px;text-align:center;top:1221px;font-size:11px;font-weight:bold;color:#555">請求金額</div>
<div class="ab" style="left:1614px;top:1242px;width:93px;height:60px;background:#f4f4f4"></div>
<div class="t" style="left:1625px;top:1264px;font-size:16px;color:#222">87,365</div>
<div class="ab" style="left:1709px;top:1211px;width:92px;height:29px;background:#ffffbb;border:0"></div>
<div class="t" style="left:1708px;width:94px;text-align:center;top:1221px;font-size:11px;font-weight:bold;color:#555">粗利益</div>
<div class="ab" style="left:1709px;top:1242px;width:92px;height:60px;background:#f4f4f4"></div>
<div class="t" style="left:1720px;top:1247px;font-size:16px;color:#222;line-height:25px">-1,644,68<br>0</div>
<div class="ab" style="left:1803px;top:1211px;width:92px;height:29px;background:#ffffbb;border:0"></div>
<div class="t" style="left:1802px;width:94px;text-align:center;top:1221px;font-size:11px;font-weight:bold;color:#555">粗利率</div>
<div class="ab" style="left:1803px;top:1242px;width:92px;height:60px;background:#f4f4f4"></div>
<div class="t" style="left:1814px;top:1264px;font-size:16px;color:#222">-1,882.53</div>
</body></html>
